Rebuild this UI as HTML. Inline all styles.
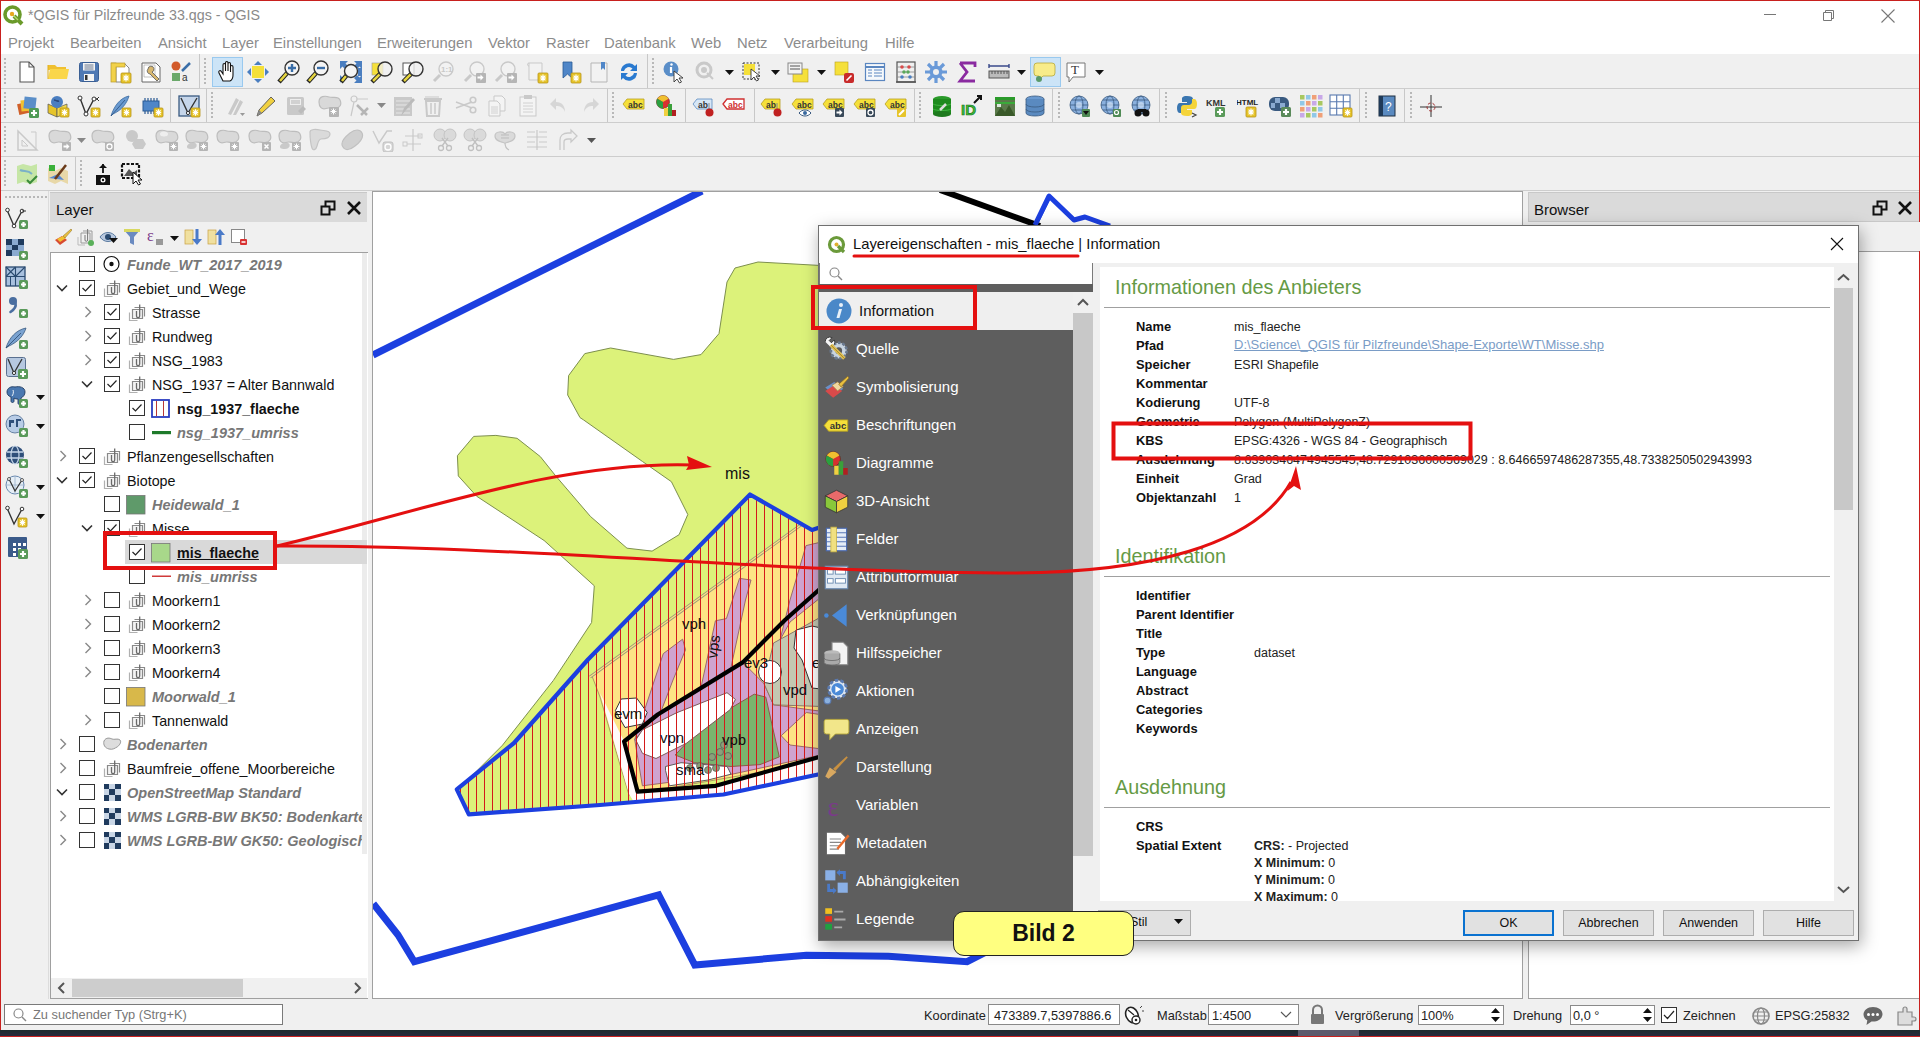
<!DOCTYPE html><html><head><meta charset="utf-8"><style>
*{margin:0;padding:0;box-sizing:border-box}
html,body{width:1920px;height:1037px;overflow:hidden;background:#f0f0f0;font-family:"Liberation Sans",sans-serif;color:#000}
div,svg{position:absolute}
.t{white-space:nowrap;line-height:1}
.tr{font-size:14.3px;color:#111}
.b{font-weight:bold}
.bi{font-weight:bold;font-style:italic;color:#777;font-size:14.5px}
.side{font-size:15px;color:#fff}
.lab{font-size:12.9px;font-weight:bold;color:#111}
.val{font-size:12.5px;color:#222}
.hd{font-size:19.8px;color:#659a45}
.st{font-size:12.8px;color:#222}
.btn{background:#e1e1e1;border:1px solid #adadad;font-size:12.5px;color:#111;text-align:center;line-height:25px}
</style></head><body><div style="left:0px;top:0px;width:1920px;height:30px;background:#fff"></div>
<div style="left:0px;top:30px;width:1920px;height:24px;background:#fff"></div>
<svg style="left:2px;top:4px;" width="22" height="22" viewBox="0 0 22 22"><circle cx="10.5" cy="10.5" r="7.5" fill="none" stroke="#6a9a2a" stroke-width="3.6"/><path d="M12 12L20 20" stroke="#6a9a2a" stroke-width="4"/><path d="M10 10L16 16" stroke="#b8d870" stroke-width="1.2"/><circle cx="10" cy="10" r="2.2" fill="#e8a820"/></svg>
<div class="t" style="left:28px;top:8px;font-size:14.25px;color:#8a8a8a">*QGIS für Pilzfreunde 33.qgs - QGIS</div>
<div class="t" style="left:8px;top:36px;font-size:14.8px;color:#8c8c8c">Projekt</div>
<div class="t" style="left:70px;top:36px;font-size:14.8px;color:#8c8c8c">Bearbeiten</div>
<div class="t" style="left:158px;top:36px;font-size:14.8px;color:#8c8c8c">Ansicht</div>
<div class="t" style="left:222px;top:36px;font-size:14.8px;color:#8c8c8c">Layer</div>
<div class="t" style="left:273px;top:36px;font-size:14.8px;color:#8c8c8c">Einstellungen</div>
<div class="t" style="left:377px;top:36px;font-size:14.8px;color:#8c8c8c">Erweiterungen</div>
<div class="t" style="left:488px;top:36px;font-size:14.8px;color:#8c8c8c">Vektor</div>
<div class="t" style="left:546px;top:36px;font-size:14.8px;color:#8c8c8c">Raster</div>
<div class="t" style="left:604px;top:36px;font-size:14.8px;color:#8c8c8c">Datenbank</div>
<div class="t" style="left:691px;top:36px;font-size:14.8px;color:#8c8c8c">Web</div>
<div class="t" style="left:737px;top:36px;font-size:14.8px;color:#8c8c8c">Netz</div>
<div class="t" style="left:784px;top:36px;font-size:14.8px;color:#8c8c8c">Verarbeitung</div>
<div class="t" style="left:885px;top:36px;font-size:14.8px;color:#8c8c8c">Hilfe</div>
<div style="left:1764px;top:14px;width:12px;height:1px;background:#777"></div>
<svg style="left:1820px;top:7px;" width="16" height="16" viewBox="0 0 16 16"><path d="M3.5 5.5h8v8h-8z M5.5 5.5v-2h8v8h-2" fill="none" stroke="#777" stroke-width="1"/></svg>
<svg style="left:1880px;top:8px;" width="16" height="16" viewBox="0 0 16 16"><path d="M1.5 1.5L14.5 14.5M14.5 1.5L1.5 14.5" stroke="#777" stroke-width="1.1"/></svg>
<div style="left:0px;top:54px;width:1920px;height:136px;background:#f0f0f0"></div>
<div style="left:0px;top:88px;width:1920px;height:1px;background:#cdcdcd"></div>
<div style="left:0px;top:122px;width:1920px;height:1px;background:#cdcdcd"></div>
<div style="left:0px;top:156px;width:1920px;height:1px;background:#cdcdcd"></div>
<div style="left:0px;top:190px;width:1920px;height:1px;background:#cdcdcd"></div>
<div style="left:0px;top:0px;width:1920px;height:1px;background:#c8201e"></div>
<div style="left:0px;top:0px;width:1px;height:1037px;background:#c8201e"></div>
<div style="left:1919px;top:0px;width:1px;height:1037px;background:#c8201e"></div>
<div style="left:1px;top:191px;width:49px;height:808px;background:#f0f0f0"></div>
<div style="left:48px;top:191px;width:1px;height:808px;background:#dcdcdc"></div>
<div style="left:50px;top:192px;width:317px;height:30px;background:#dadada;border-top:1px solid #c8c8c8"></div>
<div class="t" style="left:56px;top:202px;font-size:15px;color:#111">Layer</div>
<div style="left:50px;top:222px;width:323px;height:30px;background:#f0f0f0"></div>
<svg style="left:320px;top:200px;" width="16" height="16" viewBox="0 0 16 16"><path d="M5.5 1.5h9v8h-9z" fill="none" stroke="#111" stroke-width="2"/><path d="M1.5 6.5h8v8h-8z" fill="#dadada" stroke="#111" stroke-width="2"/></svg>
<svg style="left:346px;top:200px;" width="16" height="16" viewBox="0 0 16 16"><path d="M2 2L14 14M14 2L2 14" stroke="#111" stroke-width="2.6"/></svg>
<svg style="left:54px;top:228px;" width="18" height="18" viewBox="0 0 18 18"><path d="M1 12l7-4 5 4-7 5z" fill="#d84a30"/><path d="M3 11l6-3 3 2-6 4z" fill="#f0c030"/><path d="M9 8l8-7 1 1-7 8z" fill="#e8c040" stroke="#8a6a20" stroke-width="0.5"/></svg>
<svg style="left:77px;top:228px;" width="18" height="18" viewBox="0 0 18 18"><path d="M4 5h9v10H4z" fill="none" stroke="#999"/><path d="M6 3h9v10" fill="none" stroke="#999"/><path d="M1 9v8h7" fill="none" stroke="#bbb"/><path d="M8 7v5a1.3 1.3 0 002.6 0V1" fill="none" stroke="#777"/><circle cx="14" cy="15" r="3" fill="#5ab05a"/></svg>
<svg style="left:99px;top:228px;" width="18" height="18" viewBox="0 0 18 18"><path d="M1 9c4-6 12-6 16 0-4 6-12 6-16 0z" fill="#b8c8de" stroke="#5a7aa0"/><circle cx="9" cy="9" r="3" fill="#2a4a70"/></svg>
<svg style="left:123px;top:228px;" width="18" height="18" viewBox="0 0 18 18"><path d="M1 2h16l-6 7v8l-4-2V9z" fill="#6a8ac0"/><rect x="1" y="1" width="16" height="3" fill="#d8d860"/></svg>
<svg style="left:146px;top:228px;" width="18" height="18" viewBox="0 0 18 18"><text x="1" y="13" font-family="Liberation Serif" font-size="16" fill="#7a3a8a">ε</text><rect x="10" y="11" width="7" height="6" fill="#999"/></svg>
<svg style="left:184px;top:228px;" width="18" height="18" viewBox="0 0 18 18"><rect x="1" y="2" width="8" height="14" fill="#f0e0a0" stroke="#c8a040" stroke-width="0.7"/><path d="M13 1v12" stroke="#4a7ac8" stroke-width="3"/><path d="M8 11l5 6 5-6z" fill="#4a7ac8"/></svg>
<svg style="left:207px;top:228px;" width="18" height="18" viewBox="0 0 18 18"><rect x="1" y="2" width="8" height="14" fill="#f0e0a0" stroke="#c8a040" stroke-width="0.7"/><path d="M13 17V5" stroke="#4a7ac8" stroke-width="3"/><path d="M8 7l5-6 5 6z" fill="#4a7ac8"/></svg>
<svg style="left:230px;top:228px;" width="18" height="18" viewBox="0 0 18 18"><rect x="1.5" y="1.5" width="13" height="13" fill="#fff" stroke="#888"/><rect x="10" y="11" width="7" height="6" rx="1" fill="#d83030"/><path d="M11.5 14h4" stroke="#fff" stroke-width="1.5"/></svg>
<svg style="left:109px;top:238px;" width="9" height="5" viewBox="0 0 9 5"><path d="M0 0h9L4.5 5z" fill="#111"/></svg>
<svg style="left:170px;top:236px;" width="9" height="5" viewBox="0 0 9 5"><path d="M0 0h9L4.5 5z" fill="#111"/></svg>
<div style="left:50px;top:252px;width:318px;height:747px;background:#fff;border-left:1px solid #a0a0a0;border-bottom:1px solid #a0a0a0;border-top:1px solid #a0a0a0"></div>
<div style="left:51px;top:978px;width:316px;height:20px;background:#f0f0f0"></div>
<div style="left:72px;top:979px;width:171px;height:18px;background:#cdcdcd"></div>
<svg style="left:55px;top:980px;" width="14" height="16" viewBox="0 0 14 16"><path d="M9 3L4 8L9 13" fill="none" stroke="#555" stroke-width="2"/></svg>
<svg style="left:350px;top:980px;" width="14" height="16" viewBox="0 0 14 16"><path d="M5 3L10 8L5 13" fill="none" stroke="#555" stroke-width="2"/></svg>
<div style="left:372px;top:191px;width:1151px;height:808px;background:#fff;border:1px solid #a0a0a0"></div>
<svg style="left:373px;top:192px;" width="1149" height="806" viewBox="0 0 1149 806"><g transform="translate(-373 -192)"><polygon points="735,268 758,262 830,266 830,772 818,774.5 723.4,794.5 600,805 468.8,814.4 456.8,789.3 465.5,782.2 502.5,745.2 553.4,680.4 591.6,622.5 594.3,585.8 544.1,540.5 476.6,496.2 458.3,475.9 457.4,455.7 473.7,436.4 495.9,435.4 517.1,438.3 540.3,456.6 555.7,475.9 590.4,516.4 627,548.2 652.1,551.1 679.1,534.7 687.8,514.5 671.4,481.7 642.5,461.5 583.7,420 580,417.6 567.7,395 568.6,375.6 584.8,353.6 610.6,348 673.6,359.4 701,354.6 719,333.6 727,282" fill="#dcf27a" stroke="#7d8f4e" stroke-width="1"/><defs><clipPath id="bpc"><polygon points="750,494.5 812,530 830,524 830,775 818,774.5 723.4,794.5 600,805 468.8,814.4 456.8,789.3 514,743 588,659.5"/></clipPath></defs><g clip-path="url(#bpc)"><polygon points="592,676 830,504 830,760 629,795 600,697" fill="#fde485" stroke="#9a8a5a" stroke-width="0.8"/><polyline points="590,677 830,504" fill="none" stroke="#9a9a7a" stroke-width="3"/><polyline points="590,677 830,504" fill="none" stroke="#fde485" stroke-width="1.2"/><polygon points="600,693 624,741 637,792 716,786 830,755 830,800 640,812 629,794" fill="#fffafa"/><polygon points="739.5,578.4 751,580 745.5,600 730,672 700,692 715.4,620.8 726.4,618.6" fill="#cfa3cf" stroke="#9a6a6a" stroke-width="1"/><polygon points="806,545.6 830,540 830,590 790,622 780,640 790,600" fill="#cfa3cf" stroke="#9a6a6a" stroke-width="1"/><polygon points="663.3,653.6 682.6,639.2 685.5,649.8 673,680 660,714 634.7,739.5" fill="#cfa3cf" stroke="#9a6a6a" stroke-width="1"/><polygon points="634.7,739.5 657.8,714.5 742.7,662.4 764,683.6 773.5,704.8 816,710.6 830,712 830,753 733,774 642.4,785.8" fill="#cfa3cf" stroke="#9a6a6a" stroke-width="1"/><polygon points="773.5,643 830,612 830,706.8 773.5,704.8 764,683.6" fill="#c3c8b2" stroke="#8a7a6a" stroke-width="1"/><polygon points="781.2,735.7 806.3,712.5 830,716 830,750 790,745" fill="#fde485" stroke="#9a6a6a" stroke-width="1"/><polygon points="675.2,755 704,724 754.2,694.2 765.8,697.1 779.3,756.9 760,764.6 731,766.5 694.5,762.7" fill="#7ab46e" stroke="#8a5a4a" stroke-width="1"/><polygon points="635.8,740 642.5,729.8 676.3,712.9 727,692.7 735.4,699.4 730.3,709.5 686.4,743.3 656,758.5 642.5,753.4" fill="#fff" stroke="#7a5a5a" stroke-width="1"/><polygon points="665.5,766.5 681,762.7 727.2,766.5 731,774.2 708,780 669.4,785.8 665.5,770.4" fill="#fff" stroke="#5a5a5a" stroke-width="1"/><polygon points="615.4,710.6 621.2,699 636.6,698 647.2,712.5 642.4,724 625,727.5" fill="#fff" stroke="#333" stroke-width="1"/><circle cx="770" cy="672" r="11.5" fill="#fff" stroke="#333" stroke-width="1"/><polygon points="796,630 812,626 830,630 830,690 812,688 802,660 794,648" fill="#fff" stroke="#333" stroke-width="1"/><circle cx="720" cy="752" r="3.5" fill="#8aa07a" stroke="#555" stroke-width="0.7"/><circle cx="728" cy="756" r="3.5" fill="#8aa07a" stroke="#555" stroke-width="0.7"/><circle cx="724" cy="745" r="3.5" fill="#8aa07a" stroke="#555" stroke-width="0.7"/><circle cx="712" cy="757" r="3.5" fill="#8aa07a" stroke="#555" stroke-width="0.7"/><circle cx="700" cy="766" r="3.5" fill="#8aa07a" stroke="#555" stroke-width="0.7"/><circle cx="690" cy="768" r="3.5" fill="#8aa07a" stroke="#555" stroke-width="0.7"/><circle cx="708" cy="770" r="3.5" fill="#8aa07a" stroke="#555" stroke-width="0.7"/><circle cx="716" cy="768" r="3.5" fill="#8aa07a" stroke="#555" stroke-width="0.7"/><path d="M452.5 490V820M460.5 490V820M468.5 490V820M476.5 490V820M484.5 490V820M492.5 490V820M500.5 490V820M508.5 490V820M516.5 490V820M524.5 490V820M532.5 490V820M540.5 490V820M548.5 490V820M556.5 490V820M564.5 490V820M572.5 490V820M580.5 490V820M588.5 490V820M596.5 490V820M604.5 490V820M612.5 490V820M620.5 490V820M628.5 490V820M636.5 490V820M644.5 490V820M652.5 490V820M660.5 490V820M668.5 490V820M676.5 490V820M684.5 490V820M692.5 490V820M700.5 490V820M708.5 490V820M716.5 490V820M724.5 490V820M732.5 490V820M740.5 490V820M748.5 490V820M756.5 490V820M764.5 490V820M772.5 490V820M780.5 490V820M788.5 490V820M796.5 490V820M804.5 490V820M812.5 490V820M820.5 490V820M828.5 490V820" stroke="#d41a1a" stroke-width="1"/></g><polyline points="830,524 812,530 750,494.5 588,659.5 514,743 456.8,789.3 468.8,814.4 600,805 723.4,794.5 818,774.5 830,772" fill="none" stroke="#1c3fe0" stroke-width="4.2" stroke-linejoin="round"/><polyline points="830,580 785,620 742.7,662.4 657.8,714.5 624.1,741.5 637.6,791.6 715.7,785.8 830,754" fill="none" stroke="#000" stroke-width="4.2" stroke-linejoin="round"/><text x="725" y="479" font-family="Liberation Sans" font-size="16" fill="#111">mis</text><text x="682" y="629" font-family="Liberation Sans" font-size="15" fill="#111">vph</text><text x="717" y="659" font-family="Liberation Sans" font-size="15" fill="#111" transform="rotate(-82 717 659)">vps</text><text x="744" y="668" font-family="Liberation Sans" font-size="15" fill="#111">ev3</text><text x="783" y="695" font-family="Liberation Sans" font-size="15" fill="#111">vpd</text><text x="812" y="668" font-family="Liberation Sans" font-size="15" fill="#111">e</text><text x="614" y="719" font-family="Liberation Sans" font-size="15" fill="#111">evm</text><text x="660" y="743" font-family="Liberation Sans" font-size="15" fill="#111">vpn</text><text x="722" y="745" font-family="Liberation Sans" font-size="15" fill="#111">vpb</text><text x="676" y="775" font-family="Liberation Sans" font-size="15" fill="#111">sma</text><polyline points="373,355 702,191" fill="none" stroke="#1c3fe0" stroke-width="7"/><polyline points="940,190 1040,226" fill="none" stroke="#000" stroke-width="6"/><polyline points="1035,225 1049,196 1074,220 1085,217 1110,226" fill="none" stroke="#1c3fe0" stroke-width="5" stroke-linejoin="round"/><polyline points="1036,226 1050,198" fill="none" stroke="#1c3fe0" stroke-width="2"/><polyline points="373.3,903.7 397.9,934.8 414.3,961.7 658.7,894.8 694.8,965 806.4,955.2 888.4,956.2 967.1,961.7 1000,945" fill="none" stroke="#1c3fe0" stroke-width="7" stroke-linejoin="miter"/></g></svg>
<div style="left:1528px;top:192px;width:391px;height:30px;background:#dadada;border:1px solid #c8c8c8;border-right:none"></div>
<div class="t" style="left:1534px;top:201.5px;font-size:15px;color:#111">Browser</div>
<svg style="left:1872px;top:200px;" width="16" height="16" viewBox="0 0 16 16"><path d="M5.5 1.5h9v8h-9z" fill="none" stroke="#111" stroke-width="2"/><path d="M1.5 6.5h8v8h-8z" fill="#dadada" stroke="#111" stroke-width="2"/></svg>
<svg style="left:1897px;top:200px;" width="16" height="16" viewBox="0 0 16 16"><path d="M2 2L14 14M14 2L2 14" stroke="#111" stroke-width="2.6"/></svg>
<div style="left:1525px;top:222px;width:395px;height:29px;background:#f0f0f0"></div>
<div style="left:1528px;top:251px;width:391px;height:748px;background:#fff;border:1px solid #a0a0a0;border-right:none"></div>
<div style="left:1px;top:999px;width:1918px;height:31px;background:#f0f0f0"></div>
<div style="left:0px;top:1030px;width:1920px;height:6px;background:linear-gradient(#1c2a2c,#28283c)"></div>
<div style="left:1298px;top:1030px;width:61px;height:6px;background:#5c5a6c"></div>
<div style="left:0px;top:1036px;width:1920px;height:1px;background:#c8201e"></div>
<div style="left:212px;top:57px;width:31px;height:30px;background:#cce4f7;border:1px solid #99c9ef"></div><div style="left:1030px;top:57px;width:31px;height:30px;background:#cce4f7;border:1px solid #99c9ef"></div><svg style="left:15px;top:60px" width="24" height="24" viewBox="0 0 24 24"><path d="M5 2h9l5 5v15H5z" fill="#fff" stroke="#555" stroke-width="1.1"/><path d="M14 2v5h5" fill="none" stroke="#555" stroke-width="1.1"/></svg><svg style="left:46px;top:60px" width="24" height="24" viewBox="0 0 24 24"><path d="M2 5h7l2 2h9v3H2z" fill="#f0c030"/><path d="M2 19L4 9h19l-2 10z" fill="#fad64a"/><path d="M2 5v14" stroke="#e0b020"/></svg><svg style="left:77px;top:60px" width="24" height="24" viewBox="0 0 24 24"><rect x="2.5" y="2.5" width="19" height="19" rx="2" fill="#4f79b4" stroke="#3a5f94"/><rect x="6" y="3" width="12" height="7.5" fill="#f4f4f4"/><path d="M7.5 5h9M7.5 7h9M7.5 9h9" stroke="#4a5a7a" stroke-width="0.8"/><rect x="7" y="14" width="10" height="7" fill="#f4f4f4"/><rect x="8" y="15" width="2.5" height="5" fill="#333"/></svg><svg style="left:108px;top:60px" width="24" height="24" viewBox="0 0 24 24"><path d="M8 4h9l4 4v14H8z" fill="#fff" stroke="#888"/><rect x="3" y="3" width="5" height="19" fill="#f2d24a" stroke="#b89a2a" stroke-width="0.7"/><path d="M3 3h14v4H8" fill="#f2d24a" stroke="#b89a2a" stroke-width="0.7"/><rect x="13" y="13" width="10" height="10" rx="1" fill="#e6c42a" stroke="#b8961a" stroke-width="0.8"/><path d="M18.0 14.5v7.0M15.0 18.0h6.0M15.6 15.6l4.800000000000001 4.800000000000001M20.4 15.6l-4.800000000000001 4.800000000000001" stroke="#fff" stroke-width="1.2"/></svg><svg style="left:139px;top:60px" width="24" height="24" viewBox="0 0 24 24"><path d="M3 3h14l4 4v15H3z" fill="#fff" stroke="#666"/><path d="M5 5h11v12H5z" fill="none" stroke="#aaa" stroke-width="0.7"/><path d="M9 9a3 3 0 114 3l7 7-2 2-7-7a3 3 0 01-2-5" fill="#d8b870" stroke="#555" stroke-width="0.8"/></svg><svg style="left:169px;top:60px" width="24" height="24" viewBox="0 0 24 24"><circle cx="7" cy="6" r="4.5" fill="#d25a2a"/><path d="M13 11L21 3" stroke="#3a6ea8" stroke-width="2.5"/><rect x="3" y="13" width="8" height="8" fill="#6aa86a"/><text x="13" y="21" font-family="Liberation Sans" font-size="10" fill="#333">a</text></svg><svg style="left:216px;top:60px" width="24" height="24" viewBox="0 0 24 24"><path d="M7 21L3 13c-1-2 1-3 2-2l2 3V5c0-2 2.5-2 2.5 0v6V3c0-2 2.5-2 2.5 0v8V4c0-2 2.5-2 2.5 0v8V7c0-2 2.5-2 2.5 0v8c0 3-1 5-3 6z" fill="#fff" stroke="#111" stroke-width="1.1"/></svg><svg style="left:246px;top:60px" width="24" height="24" viewBox="0 0 24 24"><rect x="6" y="6" width="12" height="12" fill="#f5e03a"/><path d="M12 1l4 4h-8zM12 23l4-4h-8zM1 12l4-4v8zM23 12l-4-4v8z" fill="#4a7ec0"/></svg><svg style="left:277px;top:60px" width="24" height="24" viewBox="0 0 24 24"><path d="M10.100000000000001 12.899999999999999L2 22" stroke="#222" stroke-width="4.5"/><path d="M9.600000000000001 13.399999999999999L3 21" stroke="#e6d640" stroke-width="2.5"/><circle cx="15" cy="8" r="7" fill="#f4f4f4" stroke="#333" stroke-width="1.4"/><path d="M11 8h8M15 4v8" stroke="#3a6ea8" stroke-width="2.4"/></svg><svg style="left:306px;top:60px" width="24" height="24" viewBox="0 0 24 24"><path d="M10.100000000000001 12.899999999999999L2 22" stroke="#222" stroke-width="4.5"/><path d="M9.600000000000001 13.399999999999999L3 21" stroke="#e6d640" stroke-width="2.5"/><circle cx="15" cy="8" r="7" fill="#f4f4f4" stroke="#333" stroke-width="1.4"/><path d="M11 8h8" stroke="#3a6ea8" stroke-width="2.4"/></svg><svg style="left:339px;top:60px" width="24" height="24" viewBox="0 0 24 24"><path d="M1 1h8L6.5 3.5 9 6 6 9 3.5 6.5 1 9zM23 1h-8l2.5 2.5L15 6l3 3 2.5-2.5L23 9zM23 23h-8l2.5-2.5L15 18l3-3 2.5 2.5L23 15zM1 23V15l2.5 2.5" fill="#4a7ec0"/><rect x="19" y="8" width="4" height="8" fill="#4a7ec0"/><path d="M7.45 15.55L2 22" stroke="#222" stroke-width="4.5"/><path d="M6.95 16.05L3 21" stroke="#e6d640" stroke-width="2.5"/><circle cx="12" cy="11" r="6.5" fill="#f4f4f4" stroke="#333" stroke-width="1.4"/></svg><svg style="left:370px;top:60px" width="24" height="24" viewBox="0 0 24 24"><rect x="2" y="3" width="11" height="12" fill="#f5e03a" stroke="#999" stroke-width="0.6"/><path d="M10.100000000000001 13.899999999999999L2 22" stroke="#222" stroke-width="4.5"/><path d="M9.600000000000001 14.399999999999999L3 21" stroke="#e6d640" stroke-width="2.5"/><circle cx="15" cy="9" r="7" fill="rgba(240,240,240,.75)" stroke="#333" stroke-width="1.4"/></svg><svg style="left:401px;top:60px" width="24" height="24" viewBox="0 0 24 24"><rect x="2" y="3" width="11" height="12" fill="#fff" stroke="#555"/><path d="M10.100000000000001 13.899999999999999L2 22" stroke="#222" stroke-width="4.5"/><path d="M9.600000000000001 14.399999999999999L3 21" stroke="#e6d640" stroke-width="2.5"/><circle cx="15" cy="9" r="7" fill="rgba(240,240,240,.8)" stroke="#333" stroke-width="1.4"/></svg><svg style="left:432px;top:60px" width="24" height="24" viewBox="0 0 24 24"><path d="M8 15L2 21" stroke="#c9c9c9" stroke-width="3"/><circle cx="14" cy="9" r="7" fill="#f2f2f2" stroke="#c9c9c9" stroke-width="1.4"/><text x="9" y="12" font-family="Liberation Sans" font-size="8" font-weight="bold" fill="#c9c9c9">1:1</text></svg><svg style="left:463px;top:60px" width="24" height="24" viewBox="0 0 24 24"><path d="M8 15L2 21" stroke="#c9c9c9" stroke-width="3"/><circle cx="14" cy="9" r="7" fill="#f2f2f2" stroke="#c9c9c9" stroke-width="1.4"/><rect x="13" y="13" width="10" height="10" rx="1" fill="#b5b5b5"/><path d="M14.5 16.5h3v-2l3 3l-3 3v-2h-3z" fill="#fff"/></svg><svg style="left:494px;top:60px" width="24" height="24" viewBox="0 0 24 24"><path d="M8 15L2 21" stroke="#c9c9c9" stroke-width="3"/><circle cx="14" cy="9" r="7" fill="#f2f2f2" stroke="#c9c9c9" stroke-width="1.4"/><rect x="13" y="13" width="10" height="10" rx="1" fill="#b5b5b5"/><path d="M14.5 16.5h3v-2l3 3l-3 3v-2h-3z" fill="#fff"/></svg><svg style="left:525px;top:60px" width="24" height="24" viewBox="0 0 24 24"><path d="M4 3h13v17H4z" fill="#f2f2f2" stroke="#c9c9c9"/><path d="M4 3c-2 0-2 3 0 3" fill="none" stroke="#c9c9c9"/><rect x="13" y="13" width="10" height="10" rx="1" fill="#e6c42a" stroke="#b8961a" stroke-width="0.8"/><path d="M18.0 14.5v7.0M15.0 18.0h6.0M15.6 15.6l4.800000000000001 4.800000000000001M20.4 15.6l-4.800000000000001 4.800000000000001" stroke="#fff" stroke-width="1.2"/></svg><svg style="left:559px;top:60px" width="24" height="24" viewBox="0 0 24 24"><path d="M4 2h9v16l-4.5-4L4 18z" fill="#4f86c8" stroke="#2a5a94" stroke-width="0.8"/><rect x="12" y="13" width="10" height="10" rx="1" fill="#e6c42a" stroke="#b8961a" stroke-width="0.8"/><path d="M17.0 14.5v7.0M14.0 18.0h6.0M14.6 15.6l4.800000000000001 4.800000000000001M19.4 15.6l-4.800000000000001 4.800000000000001" stroke="#fff" stroke-width="1.2"/></svg><svg style="left:587px;top:60px" width="24" height="24" viewBox="0 0 24 24"><path d="M4 3h16v19H4z" fill="#f2f2f2" stroke="#b5b5b5"/><path d="M14 2h4v8l-2-2-2 2z" fill="#4f86c8"/></svg><svg style="left:617px;top:60px" width="24" height="24" viewBox="0 0 24 24"><path d="M4 11a8 8 0 0114-5l2-2v7h-7l2.5-2.5A5 5 0 007 11z" fill="#2a7ad0"/><path d="M20 13a8 8 0 01-14 5l-2 2v-7h7l-2.5 2.5A5 5 0 0017 13z" fill="#2a7ad0"/></svg><svg style="left:662px;top:60px" width="24" height="24" viewBox="0 0 24 24"><circle cx="9" cy="9" r="7.5" fill="#5a8ec8"/><path d="M9 7v6" stroke="#fff" stroke-width="2.2"/><circle cx="9.5" cy="4.5" r="1.2" fill="#fff"/><path d="M12 11v11l3-3 2.5 4 2-1-2.5-4h4z" fill="#fff" stroke="#333" stroke-width="0.9"/></svg><svg style="left:693px;top:60px" width="24" height="24" viewBox="0 0 24 24"><circle cx="11" cy="10" r="7" fill="none" stroke="#c9c9c9" stroke-width="3"/><circle cx="11" cy="10" r="3" fill="#c9c9c9"/><path d="M14 13l6 6" stroke="#c9c9c9" stroke-width="2"/></svg><svg style="left:740px;top:60px" width="24" height="24" viewBox="0 0 24 24"><rect x="3" y="3" width="16" height="16" fill="none" stroke="#333" stroke-dasharray="2 1.5"/><rect x="4" y="4" width="11" height="11" fill="#f5e03a"/><path d="M11 9v11l3-3 2.5 4 2-1-2.5-4h4z" fill="#fff" stroke="#333" stroke-width="0.9"/></svg><svg style="left:786px;top:60px" width="24" height="24" viewBox="0 0 24 24"><rect x="7" y="9" width="15" height="13" fill="#f5e03a" stroke="#bba020" stroke-width="0.6"/><rect x="2" y="3" width="14" height="11" fill="#f2f2f2" stroke="#888"/><path d="M4 6h10M4 9h10" stroke="#888" stroke-width="1.4"/></svg><svg style="left:832px;top:60px" width="24" height="24" viewBox="0 0 24 24"><rect x="3" y="2" width="13" height="13" fill="#f5e03a" stroke="#bba020" stroke-width="0.6"/><rect x="12" y="13" width="10" height="10" rx="2" fill="#c82a2a"/><path d="M14.5 20.5l5-5" stroke="#fff" stroke-width="1.6"/></svg><svg style="left:863px;top:60px" width="24" height="24" viewBox="0 0 24 24"><rect x="2.5" y="3.5" width="19" height="17" fill="#f6f9fc" stroke="#5a86c0" stroke-width="1.2"/><path d="M3 7h18" stroke="#5a86c0" stroke-width="2"/><path d="M5 10h4M11 10h8M5 13h4M11 13h8M5 16h4M11 16h8" stroke="#5a86c0"/></svg><svg style="left:894px;top:60px" width="24" height="24" viewBox="0 0 24 24"><rect x="3" y="2" width="18" height="20" fill="none" stroke="#555" stroke-width="1.2"/><path d="M3 7h18M3 12h18M3 17h18" stroke="#888" stroke-width="0.8"/><circle cx="8" cy="7" r="1.8" fill="#d84a4a"/><circle cx="15" cy="7" r="1.8" fill="#d84a4a"/><circle cx="10" cy="12" r="1.8" fill="#5aa85a"/><circle cx="14" cy="12" r="1.8" fill="#5aa85a"/><circle cx="8" cy="17" r="1.8" fill="#4a7ec0"/><circle cx="16" cy="17" r="1.8" fill="#4a7ec0"/><path d="M2 22h20" stroke="#555" stroke-width="1.5"/></svg><svg style="left:924px;top:60px" width="24" height="24" viewBox="0 0 24 24"><circle cx="12" cy="12" r="6.5" fill="#6a9ad8"/><path d="M12 1v22M1 12h22M4 4l16 16M20 4L4 20" stroke="#6a9ad8" stroke-width="3.2"/><circle cx="12" cy="12" r="3" fill="#f0f0f0"/></svg><svg style="left:956px;top:60px" width="24" height="24" viewBox="0 0 24 24"><path d="M4 3h15v4M19 21H4l7-9-7-9" fill="none" stroke="#8a2aa0" stroke-width="2.8"/></svg><svg style="left:987px;top:60px" width="24" height="24" viewBox="0 0 24 24"><rect x="2" y="11" width="20" height="7" fill="#bbb" stroke="#555"/><path d="M5 11v3M8 11v3M11 11v3M14 11v3M17 11v3M20 11v3" stroke="#555"/><path d="M2 6h20M2 4v4M22 4v4" stroke="#3a4a8a" stroke-width="1.4"/></svg><svg style="left:1033px;top:60px" width="24" height="24" viewBox="0 0 24 24"><path d="M4 3h15a3 3 0 013 3v7a3 3 0 01-3 3H10l-4 4v-4H4a3 3 0 01-3-3V6a3 3 0 013-3z" fill="#f8ec8a" stroke="#b8a83a" stroke-width="0.8"/><circle cx="6" cy="19" r="3" fill="#5a9a6a"/></svg><svg style="left:1064px;top:60px" width="24" height="24" viewBox="0 0 24 24"><path d="M3 3h18v14H9l-4 5v-5H3z" fill="#fff" stroke="#777"/><text x="7" y="14" font-family="Liberation Serif" font-size="13" fill="#333">T</text></svg><svg style="left:725px;top:70px" width="9" height="5"><path d="M0 0h9L4.5 5z" fill="#111"/></svg><svg style="left:771px;top:70px" width="9" height="5"><path d="M0 0h9L4.5 5z" fill="#111"/></svg><svg style="left:817px;top:70px" width="9" height="5"><path d="M0 0h9L4.5 5z" fill="#111"/></svg><svg style="left:1017px;top:70px" width="9" height="5"><path d="M0 0h9L4.5 5z" fill="#111"/></svg><svg style="left:1095px;top:70px" width="9" height="5"><path d="M0 0h9L4.5 5z" fill="#111"/></svg><svg style="left:4px;top:58px" width="2" height="28"><rect x="0" y="0" width="2" height="2" fill="#b8b8b8"/><rect x="0" y="4" width="2" height="2" fill="#b8b8b8"/><rect x="0" y="8" width="2" height="2" fill="#b8b8b8"/><rect x="0" y="12" width="2" height="2" fill="#b8b8b8"/><rect x="0" y="16" width="2" height="2" fill="#b8b8b8"/><rect x="0" y="20" width="2" height="2" fill="#b8b8b8"/><rect x="0" y="24" width="2" height="2" fill="#b8b8b8"/></svg><div style="left:199px;top:54px;width:1px;height:34px;background:#c8c8c8"></div><svg style="left:204px;top:58px" width="2" height="28"><rect x="0" y="0" width="2" height="2" fill="#b8b8b8"/><rect x="0" y="4" width="2" height="2" fill="#b8b8b8"/><rect x="0" y="8" width="2" height="2" fill="#b8b8b8"/><rect x="0" y="12" width="2" height="2" fill="#b8b8b8"/><rect x="0" y="16" width="2" height="2" fill="#b8b8b8"/><rect x="0" y="20" width="2" height="2" fill="#b8b8b8"/><rect x="0" y="24" width="2" height="2" fill="#b8b8b8"/></svg><div style="left:647px;top:54px;width:1px;height:34px;background:#c8c8c8"></div><svg style="left:652px;top:58px" width="2" height="28"><rect x="0" y="0" width="2" height="2" fill="#b8b8b8"/><rect x="0" y="4" width="2" height="2" fill="#b8b8b8"/><rect x="0" y="8" width="2" height="2" fill="#b8b8b8"/><rect x="0" y="12" width="2" height="2" fill="#b8b8b8"/><rect x="0" y="16" width="2" height="2" fill="#b8b8b8"/><rect x="0" y="20" width="2" height="2" fill="#b8b8b8"/><rect x="0" y="24" width="2" height="2" fill="#b8b8b8"/></svg><svg style="left:16px;top:94px" width="24" height="24" viewBox="0 0 24 24"><rect x="2" y="9" width="10" height="11" fill="#d0602a" transform="rotate(-12 7 14)"/><rect x="5" y="6" width="10" height="11" fill="#f0c030" transform="rotate(-6 10 12)"/><rect x="8" y="3" width="12" height="12" fill="#5a8ec8" transform="rotate(6 14 9)"/><rect x="13" y="14" width="10" height="10" rx="1.5" fill="#4f9a55"/><path d="M18.0 16v6M15 19.0h6" stroke="#fff" stroke-width="2.2"/></svg><svg style="left:46px;top:94px" width="24" height="24" viewBox="0 0 24 24"><path d="M2 10l9 4v9l-9-4z" fill="#e6c42a" stroke="#555" stroke-width="0.7"/><path d="M11 14l10-4v9l-10 4z" fill="#f2d84a" stroke="#555" stroke-width="0.7"/><circle cx="11" cy="8" r="6" fill="#4a7ec0"/><path d="M8 6c2 0 3 2 5 1" stroke="#2a4a80" stroke-width="1.5"/><rect x="14" y="14" width="9" height="9" rx="1" fill="#e6c42a" stroke="#b8961a" stroke-width="0.8"/><path d="M18.5 15.3v6.3999999999999995M15.8 18.5h5.3999999999999995M16.34 16.34l4.319999999999999 4.319999999999999M20.66 16.34l-4.319999999999999 4.319999999999999" stroke="#fff" stroke-width="1.2"/></svg><svg style="left:77px;top:94px" width="24" height="24" viewBox="0 0 24 24"><path d="M3 4l6 16 8-15h5" fill="none" stroke="#333" stroke-width="1.4"/><circle cx="3" cy="4" r="2" fill="#fff" stroke="#333"/><circle cx="9" cy="20" r="2" fill="#fff" stroke="#333"/><circle cx="17" cy="5" r="2" fill="#fff" stroke="#333"/><path d="M22 3l-2 2 2 2" fill="#fff" stroke="#333"/><rect x="14" y="14" width="9" height="9" rx="1" fill="#e6c42a" stroke="#b8961a" stroke-width="0.8"/><path d="M18.5 15.3v6.3999999999999995M15.8 18.5h5.3999999999999995M16.34 16.34l4.319999999999999 4.319999999999999M20.66 16.34l-4.319999999999999 4.319999999999999" stroke="#fff" stroke-width="1.2"/></svg><svg style="left:108px;top:94px" width="24" height="24" viewBox="0 0 24 24"><path d="M3 22C6 12 12 4 21 2C19 9 14 16 5 20z" fill="#6a9ad0" stroke="#3a6aa0" stroke-width="0.8"/><path d="M3 22L17 6" stroke="#2a5080" stroke-width="0.8"/><rect x="14" y="14" width="9" height="9" rx="1" fill="#e6c42a" stroke="#b8961a" stroke-width="0.8"/><path d="M18.5 15.3v6.3999999999999995M15.8 18.5h5.3999999999999995M16.34 16.34l4.319999999999999 4.319999999999999M20.66 16.34l-4.319999999999999 4.319999999999999" stroke="#fff" stroke-width="1.2"/></svg><svg style="left:140px;top:94px" width="24" height="24" viewBox="0 0 24 24"><rect x="3" y="7" width="16" height="10" fill="#4f86c8" stroke="#2a5a94"/><path d="M5 4v3M8 4v3M11 4v3M14 4v3M17 4v3M5 17v3M8 17v3M11 17v3M14 17v3" stroke="#2a5a94" stroke-width="1.2"/><rect x="14" y="14" width="9" height="9" rx="1" fill="#e6c42a" stroke="#b8961a" stroke-width="0.8"/><path d="M18.5 15.3v6.3999999999999995M15.8 18.5h5.3999999999999995M16.34 16.34l4.319999999999999 4.319999999999999M20.66 16.34l-4.319999999999999 4.319999999999999" stroke="#fff" stroke-width="1.2"/></svg><svg style="left:177px;top:94px" width="24" height="24" viewBox="0 0 24 24"><rect x="2" y="2" width="20" height="20" fill="#c6d6ea" stroke="#3a5a80" stroke-width="1.3"/><path d="M4 4l7 15 9-15" fill="none" stroke="#333" stroke-width="1.4"/><circle cx="11" cy="19" r="1.6" fill="#fff" stroke="#333"/><rect x="14" y="14" width="9" height="9" rx="1" fill="#e6c42a" stroke="#b8961a" stroke-width="0.8"/><path d="M18.5 15.3v6.3999999999999995M15.8 18.5h5.3999999999999995M16.34 16.34l4.319999999999999 4.319999999999999M20.66 16.34l-4.319999999999999 4.319999999999999" stroke="#fff" stroke-width="1.2"/></svg><svg style="left:224px;top:94px" width="24" height="24" viewBox="0 0 24 24"><path d="M4 20L12 4l3 2-8 15zM9 21l7-15 3 2-7 13z" fill="#c9c9c9"/><path d="M16 19h5l-2.5 3z" fill="#999"/></svg><svg style="left:254px;top:94px" width="24" height="24" viewBox="0 0 24 24"><path d="M3 22l2-6L17 3l4 4L8 19z" fill="#f0d040" stroke="#555" stroke-width="0.9"/><path d="M3 22l2-6 3 3z" fill="#888"/></svg><svg style="left:284px;top:94px" width="24" height="24" viewBox="0 0 24 24"><rect x="3" y="3" width="17" height="18" rx="1.5" fill="#c9c9c9"/><path d="M6 5h11v6H6z" fill="#eee"/><path d="M7 7h9M7 9h9" stroke="#b5b5b5"/><path d="M14 17l5-5 3 3-5 5z" fill="#bbb"/></svg><svg style="left:318px;top:94px" width="24" height="24" viewBox="0 0 24 24"><path d="M1 8C1 2 7 1.5 11 3S20 1.5 22 6S22 14 17 14.5S12 13 8 14.5S1 13 1 8z" fill="#d9d9d9" stroke="#bdbdbd" stroke-width="1.2"/><rect x="11" y="13" width="10" height="10" rx="1" fill="#b5b5b5"/><path d="M15.5 14.5v6M12.5 17.5h6M13.5 15.5l4 4M17.5 15.5l-4 4" stroke="#fff" stroke-width="1"/></svg><svg style="left:347px;top:94px" width="24" height="24" viewBox="0 0 24 24"><circle cx="7" cy="5" r="3" fill="none" stroke="#c9c9c9" stroke-width="1.2"/><path d="M7 8L4 22M10 5h11" stroke="#c9c9c9" stroke-width="1.2"/><path d="M10 11l10 10M14 21l7-7" stroke="#b5b5b5" stroke-width="2.5"/></svg><svg style="left:392px;top:94px" width="24" height="24" viewBox="0 0 24 24"><rect x="2" y="3" width="18" height="19" fill="#c9c9c9"/><path d="M4 7h14M4 11h14M4 15h14M4 19h14" stroke="#e6e6e6"/><path d="M9 22l3-8 9-10 2 2-9 10z" fill="#bbb"/></svg><svg style="left:421px;top:94px" width="24" height="24" viewBox="0 0 24 24"><path d="M3 4h18v2H3z" fill="#c9c9c9"/><path d="M5 7h14l-1 15H6z" fill="none" stroke="#c9c9c9" stroke-width="2"/><path d="M10 9v11M14 9v11" stroke="#c9c9c9" stroke-width="1.5"/><path d="M4 3h14" stroke="#c9c9c9"/></svg><svg style="left:454px;top:94px" width="24" height="24" viewBox="0 0 24 24"><path d="M2 8l16 6M2 14l16-6" stroke="#c9c9c9" stroke-width="1.4"/><circle cx="19" cy="6" r="2.8" fill="none" stroke="#c9c9c9" stroke-width="1.6"/><circle cx="19" cy="16" r="2.8" fill="none" stroke="#c9c9c9" stroke-width="1.6"/></svg><svg style="left:485px;top:94px" width="24" height="24" viewBox="0 0 24 24"><path d="M9 2h8l3 3v12H9z" fill="#f4f4f4" stroke="#c9c9c9"/><path d="M4 7h8l3 3v12H4z" fill="#f4f4f4" stroke="#c9c9c9"/><path d="M6 13h7M6 15h7M6 17h7M6 19h7" stroke="#c9c9c9" stroke-width="0.8"/></svg><svg style="left:516px;top:94px" width="24" height="24" viewBox="0 0 24 24"><rect x="4" y="3" width="16" height="19" fill="#f4f4f4" stroke="#c9c9c9"/><rect x="8" y="1" width="8" height="4" fill="#c9c9c9"/><path d="M7 9h10M7 12h10M7 15h10M7 18h10" stroke="#c9c9c9" stroke-width="0.8"/></svg><svg style="left:547px;top:94px" width="24" height="24" viewBox="0 0 24 24"><path d="M9 4L3 10l6 6v-4c4 0 7 1 9 6 0-6-3-10-9-10z" fill="#d6d6d6"/></svg><svg style="left:578px;top:94px" width="24" height="24" viewBox="0 0 24 24"><path d="M15 4l6 6-6 6v-4c-4 0-7 1-9 6 0-6 3-10 9-10z" fill="#d6d6d6"/></svg><svg style="left:622px;top:94px" width="24" height="24" viewBox="0 0 24 24"><path d="M1 10l4-5h17v10H5z" fill="#f5e03a" stroke="#b8a020" stroke-width="0.8"/><text x="6" y="13.5" font-family="Liberation Sans" font-size="8.5" font-weight="bold" fill="#333">abc</text></svg><svg style="left:654px;top:94px" width="24" height="24" viewBox="0 0 24 24"><circle cx="9" cy="8" r="6.5" fill="#d83030" stroke="#5a2a1a" stroke-width="0.6"/><path d="M9 8L3.4 4.8A6.5 6.5 0 0114.6 4.8z" fill="#f0c030"/><path d="M9 8L3.4 4.8A6.5 6.5 0 009 14.5z" fill="#2aa040"/><rect x="10" y="14" width="4" height="8" fill="#f0d040"/><rect x="14" y="10" width="4" height="12" fill="#3aa03a"/><rect x="18" y="16" width="4" height="6" fill="#b02020"/></svg><svg style="left:692px;top:94px" width="24" height="24" viewBox="0 0 24 24"><path d="M1 10l4-5h15v10H5z" fill="#d6e6f6" stroke="#5a8ac0" stroke-width="0.8"/><text x="6" y="13.5" font-family="Liberation Sans" font-size="8.5" font-weight="bold" fill="#333">ab</text><path d="M17 9v8" stroke="#888"/><circle cx="17.5" cy="18.5" r="4" fill="#c02020"/></svg><svg style="left:722px;top:94px" width="24" height="24" viewBox="0 0 24 24"><path d="M1 10l4-5h17v10H5z" fill="#fff" stroke="#d03030" stroke-width="1.3"/><text x="6" y="13.5" font-family="Liberation Sans" font-size="8.5" font-weight="bold" fill="#d03030">abc</text></svg><svg style="left:760px;top:94px" width="24" height="24" viewBox="0 0 24 24"><path d="M1 10l4-5h15v10H5z" fill="#f5e03a" stroke="#b8a020" stroke-width="0.8"/><text x="6" y="13.5" font-family="Liberation Sans" font-size="8.5" font-weight="bold" fill="#333">ab</text><path d="M17 9v8" stroke="#888"/><circle cx="17.5" cy="18.5" r="4" fill="#c02020"/></svg><svg style="left:791px;top:94px" width="24" height="24" viewBox="0 0 24 24"><path d="M1 10l4-5h17v10H5z" fill="#f5e03a" stroke="#b8a020" stroke-width="0.8"/><text x="6" y="13.5" font-family="Liberation Sans" font-size="8.5" font-weight="bold" fill="#333">abc</text><path d="M8 19c3-4 9-4 12 0-3 4-9 4-12 0z" fill="#fff" stroke="#3a5a80"/><circle cx="14" cy="19" r="2" fill="#3a6aa0"/></svg><svg style="left:822px;top:94px" width="24" height="24" viewBox="0 0 24 24"><path d="M1 10l4-5h17v10H5z" fill="#f5e03a" stroke="#b8a020" stroke-width="0.8"/><text x="6" y="13.5" font-family="Liberation Sans" font-size="8.5" font-weight="bold" fill="#333">abc</text><rect x="13" y="14" width="9" height="9" rx="1" fill="#3a4a5a"/><path d="M14.5 17.5h3v-2l3 3-3 3v-2h-3z" fill="#fff"/></svg><svg style="left:853px;top:94px" width="24" height="24" viewBox="0 0 24 24"><path d="M1 10l4-5h17v10H5z" fill="#f5e03a" stroke="#b8a020" stroke-width="0.8"/><text x="6" y="13.5" font-family="Liberation Sans" font-size="8.5" font-weight="bold" fill="#333">abc</text><rect x="13" y="14" width="9" height="9" rx="1" fill="#3a4a5a"/><circle cx="17.5" cy="18.5" r="2.5" fill="none" stroke="#fff" stroke-width="1.3"/></svg><svg style="left:884px;top:94px" width="24" height="24" viewBox="0 0 24 24"><path d="M1 10l4-5h17v10H5z" fill="#f5e03a" stroke="#b8a020" stroke-width="0.8"/><text x="6" y="13.5" font-family="Liberation Sans" font-size="8.5" font-weight="bold" fill="#333">abc</text><rect x="13" y="14" width="9" height="9" rx="1" fill="#e6c42a"/><path d="M15 21l5-5" stroke="#fff" stroke-width="2"/></svg><svg style="left:930px;top:94px" width="24" height="24" viewBox="0 0 24 24"><ellipse cx="12" cy="5" rx="9" ry="3" fill="#2a9a2a"/><rect x="3" y="5" width="18" height="15" fill="#1e8a1e"/><ellipse cx="12" cy="20" rx="9" ry="3" fill="#1e7a1e"/><path d="M3 10c3 2 15 2 18 0M3 15c3 2 15 2 18 0" stroke="#4ac04a" stroke-width="0.8" fill="none"/><path d="M10 16l6-6" stroke="#ddd" stroke-width="2.5"/></svg><svg style="left:960px;top:94px" width="24" height="24" viewBox="0 0 24 24"><text x="1" y="21" font-family="Liberation Sans" font-size="15" font-weight="bold" fill="#3ac03a" stroke="#1a6a1a" stroke-width="0.6">ID</text><path d="M14 9L21 2M17 2h4v4" stroke="#111" stroke-width="2" fill="none"/></svg><svg style="left:993px;top:94px" width="24" height="24" viewBox="0 0 24 24"><rect x="2" y="3" width="20" height="19" fill="#5a7a4a"/><rect x="2" y="3" width="20" height="3" fill="#2a9a2a"/><rect x="2" y="8" width="20" height="2" fill="#3aaa3a"/><path d="M2 22l6-9 4 5 4-7 6 11z" fill="#3a5a2a"/><rect x="4" y="10" width="4" height="3" fill="#dde8dd"/></svg><svg style="left:1023px;top:94px" width="24" height="24" viewBox="0 0 24 24"><ellipse cx="12" cy="5" rx="9" ry="3" fill="#6a9ad0" stroke="#3a5a80" stroke-width="0.8"/><path d="M3 5v14c0 4 18 4 18 0V5" fill="#5a8ac0" stroke="#3a5a80" stroke-width="0.8"/><path d="M3 10c0 4 18 4 18 0M3 15c0 4 18 4 18 0" stroke="#3a5a80" fill="none" stroke-width="0.8"/></svg><svg style="left:1068px;top:94px" width="24" height="24" viewBox="0 0 24 24"><circle cx="11" cy="11" r="9" fill="#8ab0de" stroke="#3a5a80" stroke-width="0.8"/><ellipse cx="11" cy="11" rx="4" ry="9" fill="none" stroke="#3a5a80" stroke-width="0.8"/><path d="M2 11h18M4 6h14M4 16h14" stroke="#3a5a80" stroke-width="0.8"/><circle cx="11" cy="11" r="3" fill="#cfe0f4" opacity=".7"/><rect x="14" y="15" width="8" height="8" rx="1" fill="#4f8a55"/><path d="M15 17h6L18 21z" fill="#111"/></svg><svg style="left:1099px;top:94px" width="24" height="24" viewBox="0 0 24 24"><circle cx="11" cy="11" r="9" fill="#8ab0de" stroke="#3a5a80" stroke-width="0.8"/><ellipse cx="11" cy="11" rx="4" ry="9" fill="none" stroke="#3a5a80" stroke-width="0.8"/><path d="M2 11h18M4 6h14M4 16h14" stroke="#3a5a80" stroke-width="0.8"/><circle cx="11" cy="11" r="3" fill="#cfe0f4" opacity=".7"/><rect x="14" y="15" width="8" height="8" rx="1" fill="#4f8a55"/><circle cx="17.5" cy="18.5" r="2" fill="none" stroke="#fff" stroke-width="1.2"/></svg><svg style="left:1130px;top:94px" width="24" height="24" viewBox="0 0 24 24"><circle cx="11" cy="11" r="9" fill="#8ab0de" stroke="#3a5a80" stroke-width="0.8"/><ellipse cx="11" cy="11" rx="4" ry="9" fill="none" stroke="#3a5a80" stroke-width="0.8"/><path d="M2 11h18M4 6h14M4 16h14" stroke="#3a5a80" stroke-width="0.8"/><circle cx="11" cy="11" r="3" fill="#cfe0f4" opacity=".7"/><circle cx="8" cy="19" r="3.5" fill="#111"/><circle cx="16" cy="19" r="3.5" fill="#111"/><rect x="8" y="15" width="8" height="3" fill="#111"/></svg><svg style="left:1175px;top:94px" width="24" height="24" viewBox="0 0 24 24"><path d="M12 2c-5 0-5 2-5 3v3h5v1H5c-2 0-3 2-3 5s1 5 3 5h2v-3c0-2 2-3 3-3h5c2 0 3-1 3-3V5c0-2-2-3-6-3z" fill="#3a76b0"/><path d="M12 22c5 0 5-2 5-3v-3h-5v-1h7c2 0 3-2 3-5s-1-5-3-5h-2v3c0 2-2 3-3 3H9c-2 0-3 1-3 3v5c0 2 2 3 6 3z" fill="#f5d43a"/><path d="M17 19l4 2-4 2" fill="none" stroke="#444" stroke-width="1.2"/></svg><svg style="left:1206px;top:94px" width="24" height="24" viewBox="0 0 24 24"><text x="0" y="12" font-family="Liberation Sans" font-size="9" font-weight="bold" fill="#333">KML</text><rect x="9" y="13" width="10" height="10" rx="1.5" fill="#5a9a5a"/><path d="M14.0 15v6M11 18.0h6" stroke="#fff" stroke-width="2.2"/></svg><svg style="left:1237px;top:94px" width="24" height="24" viewBox="0 0 24 24"><text x="-1" y="11" font-family="Liberation Sans" font-size="8" font-weight="bold" fill="#222">HTML</text><rect x="9" y="13" width="10" height="10" rx="1" fill="#e6c42a" stroke="#b8961a" stroke-width="0.8"/><path d="M14.0 14.5v7.0M11.0 18.0h6.0M11.6 15.6l4.800000000000001 4.800000000000001M16.4 15.6l-4.800000000000001 4.800000000000001" stroke="#fff" stroke-width="1.2"/></svg><svg style="left:1268px;top:94px" width="24" height="24" viewBox="0 0 24 24"><rect x="1" y="3" width="20" height="14" rx="6" fill="#3a5a80"/><path d="M7 4h5v5H7zM12 9h5v5h-5zM3 9h4v5H3z" fill="#8aaad0"/><rect x="13" y="13" width="10" height="10" rx="1.5" fill="#5a8a5a"/><path d="M18.0 15v6M15 18.0h6" stroke="#fff" stroke-width="2.2"/></svg><svg style="left:1299px;top:94px" width="24" height="24" viewBox="0 0 24 24"><rect x="1" y="1" width="4.5" height="4.5" fill="#a8c860"/><rect x="7" y="1" width="4.5" height="4.5" fill="#90c8e8"/><rect x="13" y="1" width="4.5" height="4.5" fill="#f0a078"/><rect x="19" y="1" width="4.5" height="4.5" fill="#c8a8e8"/><rect x="1" y="7" width="4.5" height="4.5" fill="#90c8e8"/><rect x="7" y="7" width="4.5" height="4.5" fill="#f0a078"/><rect x="13" y="7" width="4.5" height="4.5" fill="#c8a8e8"/><rect x="19" y="7" width="4.5" height="4.5" fill="#a8c860"/><rect x="1" y="13" width="4.5" height="4.5" fill="#f0a078"/><rect x="7" y="13" width="4.5" height="4.5" fill="#c8a8e8"/><rect x="13" y="13" width="4.5" height="4.5" fill="#a8c860"/><rect x="19" y="13" width="4.5" height="4.5" fill="#90c8e8"/><rect x="1" y="19" width="4.5" height="4.5" fill="#c8a8e8"/><rect x="7" y="19" width="4.5" height="4.5" fill="#a8c860"/><rect x="13" y="19" width="4.5" height="4.5" fill="#90c8e8"/><rect x="19" y="19" width="4.5" height="4.5" fill="#f0a078"/></svg><svg style="left:1329px;top:94px" width="24" height="24" viewBox="0 0 24 24"><rect x="1" y="1" width="20" height="20" fill="#fff" stroke="#5a7ab0" stroke-width="1.1"/><path d="M7.7 1v20M14.3 1v20M1 7.7h20M1 14.3h20" stroke="#5a7ab0" stroke-width="1.1"/><rect x="14" y="14" width="9" height="9" rx="1" fill="#e6c42a" stroke="#b8961a" stroke-width="0.8"/><path d="M18.5 15.3v6.3999999999999995M15.8 18.5h5.3999999999999995M16.34 16.34l4.319999999999999 4.319999999999999M20.66 16.34l-4.319999999999999 4.319999999999999" stroke="#fff" stroke-width="1.2"/></svg><svg style="left:1375px;top:94px" width="24" height="24" viewBox="0 0 24 24"><rect x="4" y="2" width="16" height="20" fill="#5a8ac0" stroke="#1f2f40" stroke-width="1"/><rect x="4" y="2" width="4" height="20" fill="#1f3a58"/><text x="10" y="17" font-family="Liberation Sans" font-size="12" fill="#fff">?</text></svg><svg style="left:1419px;top:94px" width="24" height="24" viewBox="0 0 24 24"><path d="M1 13h22M12 1v22" stroke="#333" stroke-width="1"/><circle cx="12" cy="13" r="4" fill="none" stroke="#a03030" stroke-width="1" stroke-dasharray="3 2"/></svg><svg style="left:377px;top:103px" width="9" height="5"><path d="M0 0h9L4.5 5z" fill="#888"/></svg><svg style="left:4px;top:92px" width="2" height="28"><rect x="0" y="0" width="2" height="2" fill="#b8b8b8"/><rect x="0" y="4" width="2" height="2" fill="#b8b8b8"/><rect x="0" y="8" width="2" height="2" fill="#b8b8b8"/><rect x="0" y="12" width="2" height="2" fill="#b8b8b8"/><rect x="0" y="16" width="2" height="2" fill="#b8b8b8"/><rect x="0" y="20" width="2" height="2" fill="#b8b8b8"/><rect x="0" y="24" width="2" height="2" fill="#b8b8b8"/></svg><div style="left:170px;top:89px;width:1px;height:33px;background:#c8c8c8"></div><div style="left:206px;top:89px;width:1px;height:33px;background:#c8c8c8"></div><div style="left:607px;top:89px;width:1px;height:33px;background:#c8c8c8"></div><div style="left:685px;top:89px;width:1px;height:33px;background:#c8c8c8"></div><div style="left:754px;top:89px;width:1px;height:33px;background:#c8c8c8"></div><div style="left:914px;top:89px;width:1px;height:33px;background:#c8c8c8"></div><div style="left:1052px;top:89px;width:1px;height:33px;background:#c8c8c8"></div><div style="left:1159px;top:89px;width:1px;height:33px;background:#c8c8c8"></div><div style="left:1359px;top:89px;width:1px;height:33px;background:#c8c8c8"></div><div style="left:1404px;top:89px;width:1px;height:33px;background:#c8c8c8"></div><svg style="left:211px;top:92px" width="2" height="28"><rect x="0" y="0" width="2" height="2" fill="#b8b8b8"/><rect x="0" y="4" width="2" height="2" fill="#b8b8b8"/><rect x="0" y="8" width="2" height="2" fill="#b8b8b8"/><rect x="0" y="12" width="2" height="2" fill="#b8b8b8"/><rect x="0" y="16" width="2" height="2" fill="#b8b8b8"/><rect x="0" y="20" width="2" height="2" fill="#b8b8b8"/><rect x="0" y="24" width="2" height="2" fill="#b8b8b8"/></svg><svg style="left:612px;top:92px" width="2" height="28"><rect x="0" y="0" width="2" height="2" fill="#b8b8b8"/><rect x="0" y="4" width="2" height="2" fill="#b8b8b8"/><rect x="0" y="8" width="2" height="2" fill="#b8b8b8"/><rect x="0" y="12" width="2" height="2" fill="#b8b8b8"/><rect x="0" y="16" width="2" height="2" fill="#b8b8b8"/><rect x="0" y="20" width="2" height="2" fill="#b8b8b8"/><rect x="0" y="24" width="2" height="2" fill="#b8b8b8"/></svg><svg style="left:919px;top:92px" width="2" height="28"><rect x="0" y="0" width="2" height="2" fill="#b8b8b8"/><rect x="0" y="4" width="2" height="2" fill="#b8b8b8"/><rect x="0" y="8" width="2" height="2" fill="#b8b8b8"/><rect x="0" y="12" width="2" height="2" fill="#b8b8b8"/><rect x="0" y="16" width="2" height="2" fill="#b8b8b8"/><rect x="0" y="20" width="2" height="2" fill="#b8b8b8"/><rect x="0" y="24" width="2" height="2" fill="#b8b8b8"/></svg><svg style="left:1058px;top:92px" width="2" height="28"><rect x="0" y="0" width="2" height="2" fill="#b8b8b8"/><rect x="0" y="4" width="2" height="2" fill="#b8b8b8"/><rect x="0" y="8" width="2" height="2" fill="#b8b8b8"/><rect x="0" y="12" width="2" height="2" fill="#b8b8b8"/><rect x="0" y="16" width="2" height="2" fill="#b8b8b8"/><rect x="0" y="20" width="2" height="2" fill="#b8b8b8"/><rect x="0" y="24" width="2" height="2" fill="#b8b8b8"/></svg><svg style="left:1165px;top:92px" width="2" height="28"><rect x="0" y="0" width="2" height="2" fill="#b8b8b8"/><rect x="0" y="4" width="2" height="2" fill="#b8b8b8"/><rect x="0" y="8" width="2" height="2" fill="#b8b8b8"/><rect x="0" y="12" width="2" height="2" fill="#b8b8b8"/><rect x="0" y="16" width="2" height="2" fill="#b8b8b8"/><rect x="0" y="20" width="2" height="2" fill="#b8b8b8"/><rect x="0" y="24" width="2" height="2" fill="#b8b8b8"/></svg><svg style="left:1365px;top:92px" width="2" height="28"><rect x="0" y="0" width="2" height="2" fill="#b8b8b8"/><rect x="0" y="4" width="2" height="2" fill="#b8b8b8"/><rect x="0" y="8" width="2" height="2" fill="#b8b8b8"/><rect x="0" y="12" width="2" height="2" fill="#b8b8b8"/><rect x="0" y="16" width="2" height="2" fill="#b8b8b8"/><rect x="0" y="20" width="2" height="2" fill="#b8b8b8"/><rect x="0" y="24" width="2" height="2" fill="#b8b8b8"/></svg><svg style="left:1410px;top:92px" width="2" height="28"><rect x="0" y="0" width="2" height="2" fill="#b8b8b8"/><rect x="0" y="4" width="2" height="2" fill="#b8b8b8"/><rect x="0" y="8" width="2" height="2" fill="#b8b8b8"/><rect x="0" y="12" width="2" height="2" fill="#b8b8b8"/><rect x="0" y="16" width="2" height="2" fill="#b8b8b8"/><rect x="0" y="20" width="2" height="2" fill="#b8b8b8"/><rect x="0" y="24" width="2" height="2" fill="#b8b8b8"/></svg><svg style="left:15px;top:128px" width="24" height="24" viewBox="0 0 24 24"><path d="M3 3v19h19z" fill="none" stroke="#c9c9c9" stroke-width="1.5"/><path d="M7 12v6h6z" fill="none" stroke="#c9c9c9"/><path d="M16 4h5v18" fill="none" stroke="#c9c9c9"/></svg><svg style="left:48px;top:128px" width="24" height="24" viewBox="0 0 24 24"><path d="M1 8C1 2 7 1.5 11 3S20 1.5 22 6S22 14 17 14.5S12 13 8 14.5S1 13 1 8z" fill="#d9d9d9" stroke="#bdbdbd" stroke-width="1.2"/><rect x="14" y="14" width="9" height="9" rx="1" fill="#b5b5b5"/><path d="M15.5 17.5h3v-2l3 3l-3 3v-2h-3z" fill="#fff"/></svg><svg style="left:91px;top:128px" width="24" height="24" viewBox="0 0 24 24"><path d="M1 8C1 2 7 1.5 11 3S20 1.5 22 6S22 14 17 14.5S12 13 8 14.5S1 13 1 8z" fill="#d9d9d9" stroke="#bdbdbd" stroke-width="1.2"/><rect x="14" y="14" width="9" height="9" rx="1" fill="#b5b5b5"/><circle cx="18.5" cy="18.5" r="2.5" fill="none" stroke="#fff" stroke-width="1.3"/></svg><svg style="left:123px;top:128px" width="24" height="24" viewBox="0 0 24 24"><circle cx="9" cy="8" r="6" fill="#c9c9c9"/><path d="M12 11h8l3 5-3 5h-8l-3-5z" fill="#c9c9c9"/></svg><svg style="left:155px;top:128px" width="24" height="24" viewBox="0 0 24 24"><path d="M1 8C1 2 7 1.5 11 3S20 1.5 22 6S22 14 17 14.5S12 13 8 14.5S1 13 1 8z" fill="#d9d9d9" stroke="#bdbdbd" stroke-width="1.2"/><ellipse cx="9" cy="6" rx="4" ry="2.5" fill="#eee"/><rect x="14" y="14" width="9" height="9" rx="1" fill="#b5b5b5"/><path d="M18.5 15.5v6M15.5 18.5h6M16.5 16.5l4 4M20.5 16.5l-4 4" stroke="#fff" stroke-width="1"/></svg><svg style="left:185px;top:128px" width="24" height="24" viewBox="0 0 24 24"><path d="M1 8C1 2 7 1.5 11 3S20 1.5 22 6S22 14 17 14.5S12 13 8 14.5S1 13 1 8z" fill="#d9d9d9" stroke="#bdbdbd" stroke-width="1.2"/><path d="M2 18c1-3 5-4 8-3s2 6-3 6-5-1-5-3z" fill="#c9c9c9"/><rect x="14" y="14" width="9" height="9" rx="1" fill="#b5b5b5"/><path d="M18.5 15.5v6M15.5 18.5h6M16.5 16.5l4 4M20.5 16.5l-4 4" stroke="#fff" stroke-width="1"/></svg><svg style="left:216px;top:128px" width="24" height="24" viewBox="0 0 24 24"><path d="M1 8C1 2 7 1.5 11 3S20 1.5 22 6S22 14 17 14.5S12 13 8 14.5S1 13 1 8z" fill="#d9d9d9" stroke="#bdbdbd" stroke-width="1.2"/><rect x="14" y="14" width="9" height="9" rx="1" fill="#b5b5b5"/><path d="M18.5 15.5v6M15.5 18.5h6M16.5 16.5l4 4M20.5 16.5l-4 4" stroke="#fff" stroke-width="1"/></svg><svg style="left:248px;top:128px" width="24" height="24" viewBox="0 0 24 24"><path d="M1 8C1 2 7 1.5 11 3S20 1.5 22 6S22 14 17 14.5S12 13 8 14.5S1 13 1 8z" fill="#d9d9d9" stroke="#bdbdbd" stroke-width="1.2"/><rect x="14" y="14" width="9" height="9" rx="1" fill="#b5b5b5"/><path d="M16.5 16.5l4 4M20.5 16.5l-4 4" stroke="#fff" stroke-width="1.5"/></svg><svg style="left:278px;top:128px" width="24" height="24" viewBox="0 0 24 24"><path d="M1 8C1 2 7 1.5 11 3S20 1.5 22 6S22 14 17 14.5S12 13 8 14.5S1 13 1 8z" fill="#d9d9d9" stroke="#bdbdbd" stroke-width="1.2"/><path d="M2 18c1-3 5-4 8-3s2 6-3 6-5-1-5-3z" fill="#c9c9c9"/><rect x="14" y="14" width="9" height="9" rx="1" fill="#b5b5b5"/><path d="M18.5 15.5v6M15.5 18.5h6M16.5 16.5l4 4M20.5 16.5l-4 4" stroke="#fff" stroke-width="1"/></svg><svg style="left:308px;top:128px" width="24" height="24" viewBox="0 0 24 24"><path d="M2 4c0-3 6-3 10-2s10 0 10 4-5 5-9 5c-2 0-3 3-4 7s-4 5-5 2S2 9 2 4z" fill="#dadada" stroke="#c4c4c4" stroke-width="1.2"/></svg><svg style="left:340px;top:128px" width="24" height="24" viewBox="0 0 24 24"><path d="M3 19c-3-4 2-10 7-14s10-4 12 0-2 9-7 13-10 5-12 1z" fill="#d0d0d0" stroke="#c0c0c0" stroke-width="1.2"/></svg><svg style="left:371px;top:128px" width="24" height="24" viewBox="0 0 24 24"><path d="M2 3l6 12 8-12h5" fill="none" stroke="#c9c9c9" stroke-width="1.4"/><rect x="12" y="14" width="10" height="10" rx="2" fill="#d6d6d6" stroke="#c0c0c0"/><circle cx="17" cy="19" r="3" fill="none" stroke="#fff" stroke-width="1.3"/></svg><svg style="left:401px;top:128px" width="24" height="24" viewBox="0 0 24 24"><path d="M12 1v22M4 8h16M6 16h14" stroke="#c9c9c9" stroke-width="1.2"/><rect x="2" y="14" width="4" height="4" fill="none" stroke="#c9c9c9"/><rect x="17" y="6" width="4" height="4" fill="none" stroke="#c9c9c9"/></svg><svg style="left:433px;top:128px" width="24" height="24" viewBox="0 0 24 24"><circle cx="7" cy="7" r="6" fill="#dadada" stroke="#c4c4c4"/><circle cx="17" cy="7" r="6" fill="#dadada" stroke="#c4c4c4"/><path d="M9 10l6 8M15 10l-6 8" stroke="#c0c0c0" stroke-width="1.4"/><circle cx="8" cy="20" r="2.5" fill="none" stroke="#c0c0c0" stroke-width="1.3"/><circle cx="16" cy="20" r="2.5" fill="none" stroke="#c0c0c0" stroke-width="1.3"/></svg><svg style="left:463px;top:128px" width="24" height="24" viewBox="0 0 24 24"><circle cx="7" cy="7" r="6" fill="#dadada" stroke="#c4c4c4"/><circle cx="17" cy="7" r="6" fill="#dadada" stroke="#c4c4c4"/><path d="M9 10l6 8M15 10l-6 8" stroke="#c0c0c0" stroke-width="1.4"/><circle cx="8" cy="20" r="2.5" fill="none" stroke="#c0c0c0" stroke-width="1.3"/><circle cx="16" cy="20" r="2.5" fill="none" stroke="#c0c0c0" stroke-width="1.3"/></svg><svg style="left:493px;top:128px" width="24" height="24" viewBox="0 0 24 24"><path d="M2 8c0-5 8-5 10-2 2-3 10-3 10 2s-6 6-10 7c-4-1-10-2-10-7z" fill="#dadada" stroke="#c4c4c4" stroke-width="1.2"/><path d="M8 7h8M8 10h8" stroke="#bbb"/><path d="M12 15c0 3 2 6 4 7" stroke="#c0c0c0" stroke-width="1.2" fill="none"/></svg><svg style="left:525px;top:128px" width="24" height="24" viewBox="0 0 24 24"><path d="M2 4h8M14 4h8M2 9h20M2 14h8M14 14h8M2 19h20M12 2v20" stroke="#c9c9c9" stroke-width="1.2"/></svg><svg style="left:555px;top:128px" width="24" height="24" viewBox="0 0 24 24"><path d="M5 22V12c0-4 3-7 8-7h3V2l6 6-6 6v-3h-3c-2 0-4 1-4 3v8" fill="none" stroke="#c9c9c9" stroke-width="1.3"/></svg><svg style="left:77px;top:138px" width="9" height="5"><path d="M0 0h9L4.5 5z" fill="#888"/></svg><svg style="left:587px;top:138px" width="9" height="5"><path d="M0 0h9L4.5 5z" fill="#555"/></svg><svg style="left:4px;top:126px" width="2" height="28"><rect x="0" y="0" width="2" height="2" fill="#b8b8b8"/><rect x="0" y="4" width="2" height="2" fill="#b8b8b8"/><rect x="0" y="8" width="2" height="2" fill="#b8b8b8"/><rect x="0" y="12" width="2" height="2" fill="#b8b8b8"/><rect x="0" y="16" width="2" height="2" fill="#b8b8b8"/><rect x="0" y="20" width="2" height="2" fill="#b8b8b8"/><rect x="0" y="24" width="2" height="2" fill="#b8b8b8"/></svg><svg style="left:15px;top:162px" width="24" height="24" viewBox="0 0 24 24"><path d="M2 4l6-2 8 2 6-2v18l-6 2-8-2-6 2z" fill="#c6e6a6"/><path d="M5 8c4 2 8 0 12 4" stroke="#7ab0c8" stroke-width="2" fill="none"/><path d="M12 18l3 3 7-7" stroke="#3a8a3a" stroke-width="2" fill="none"/></svg><svg style="left:46px;top:162px" width="24" height="24" viewBox="0 0 24 24"><path d="M2 6l7 3 6-3 7 3v13l-7-3-6 3-7-3z" fill="#e8d8a8"/><rect x="3" y="3" width="6" height="6" fill="#3ab03a"/><path d="M3 16l9-4 6 6" fill="#5a8ad0"/><path d="M9 17L20 3" stroke="#6a3a1a" stroke-width="2.5"/></svg><svg style="left:91px;top:162px" width="24" height="24" viewBox="0 0 24 24"><rect x="5" y="13" width="14" height="10" fill="#111"/><circle cx="12" cy="18" r="2.5" fill="#fff"/><circle cx="12" cy="18" r="1.2" fill="#111"/><path d="M12 2v9" stroke="#111" stroke-width="1.8"/><path d="M8 6l4-4 4 4z" fill="#111"/></svg><svg style="left:120px;top:162px" width="24" height="24" viewBox="0 0 24 24"><rect x="2" y="2" width="17" height="14" fill="none" stroke="#111" stroke-width="2.2" stroke-dasharray="3 1.5"/><path d="M4 14l5-7 4 4 4-3v6z" fill="#555"/><path d="M13 10v12l3-3 2.5 4 2-1-2.5-4h4z" fill="#fff" stroke="#111" stroke-width="1"/></svg><svg style="left:4px;top:160px" width="2" height="28"><rect x="0" y="0" width="2" height="2" fill="#b8b8b8"/><rect x="0" y="4" width="2" height="2" fill="#b8b8b8"/><rect x="0" y="8" width="2" height="2" fill="#b8b8b8"/><rect x="0" y="12" width="2" height="2" fill="#b8b8b8"/><rect x="0" y="16" width="2" height="2" fill="#b8b8b8"/><rect x="0" y="20" width="2" height="2" fill="#b8b8b8"/><rect x="0" y="24" width="2" height="2" fill="#b8b8b8"/></svg><div style="left:75px;top:157px;width:1px;height:33px;background:#c8c8c8"></div><svg style="left:80px;top:160px" width="2" height="28"><rect x="0" y="0" width="2" height="2" fill="#b8b8b8"/><rect x="0" y="4" width="2" height="2" fill="#b8b8b8"/><rect x="0" y="8" width="2" height="2" fill="#b8b8b8"/><rect x="0" y="12" width="2" height="2" fill="#b8b8b8"/><rect x="0" y="16" width="2" height="2" fill="#b8b8b8"/><rect x="0" y="20" width="2" height="2" fill="#b8b8b8"/><rect x="0" y="24" width="2" height="2" fill="#b8b8b8"/></svg><svg style="left:5px;top:196px" width="42" height="2"><rect x="0" y="0" width="2" height="2" fill="#b8b8b8"/><rect x="4" y="0" width="2" height="2" fill="#b8b8b8"/><rect x="8" y="0" width="2" height="2" fill="#b8b8b8"/><rect x="12" y="0" width="2" height="2" fill="#b8b8b8"/><rect x="16" y="0" width="2" height="2" fill="#b8b8b8"/><rect x="20" y="0" width="2" height="2" fill="#b8b8b8"/><rect x="24" y="0" width="2" height="2" fill="#b8b8b8"/><rect x="28" y="0" width="2" height="2" fill="#b8b8b8"/><rect x="32" y="0" width="2" height="2" fill="#b8b8b8"/><rect x="36" y="0" width="2" height="2" fill="#b8b8b8"/><rect x="40" y="0" width="2" height="2" fill="#b8b8b8"/></svg><svg style="left:5px;top:206px" width="24" height="24" viewBox="0 0 24 24"><path d="M2 4l7 16 8-15" fill="none" stroke="#333" stroke-width="1.4"/><circle cx="2.5" cy="4" r="1.8" fill="#fff" stroke="#333"/><circle cx="9" cy="20" r="1.8" fill="#fff" stroke="#333"/><circle cx="17" cy="5" r="1.8" fill="#fff" stroke="#333"/><path d="M17 5h4" stroke="#333"/><rect x="14" y="14" width="9" height="9" rx="1.5" fill="#5a9a5a"/><path d="M18.5 16v5M16 18.5h5" stroke="#fff" stroke-width="2.2"/></svg><svg style="left:5px;top:237px" width="24" height="24" viewBox="0 0 24 24"><rect x="1" y="2" width="18" height="17" fill="#8aaad0"/><path d="M1 2h6v6H1zM13 2h6v6h-6zM7 8h6v5H7zM1 13h6v6H1z" fill="#1f3b5e"/><rect x="14" y="14" width="9" height="9" rx="1.5" fill="#5a9a5a"/><path d="M18.5 16v5M16 18.5h5" stroke="#fff" stroke-width="2.2"/></svg><svg style="left:5px;top:266px" width="24" height="24" viewBox="0 0 24 24"><rect x="1" y="1" width="19" height="19" fill="#a8c0de" stroke="#2a4a70" stroke-width="1.3"/><path d="M10.5 1v19M1 10.5h19M1 1l9.5 9.5M10.5 1L1 10.5M10.5 10.5L20 1" stroke="#2a4a70" stroke-width="1.1"/><path d="M5.5 10.5v9.5" stroke="#2a4a70"/><rect x="14" y="14" width="9" height="9" rx="1.5" fill="#5a9a5a"/><path d="M18.5 16v5M16 18.5h5" stroke="#fff" stroke-width="2.2"/></svg><svg style="left:5px;top:295px" width="24" height="24" viewBox="0 0 24 24"><circle cx="8" cy="6" r="4" fill="#4a6ea0"/><path d="M10.5 8c1 4-2 7-5 9" fill="none" stroke="#4a6ea0" stroke-width="2.6" stroke-linecap="round"/><rect x="14" y="14" width="9" height="9" rx="1.5" fill="#5a9a5a"/><path d="M18.5 16v5M16 18.5h5" stroke="#fff" stroke-width="2.2"/></svg><svg style="left:5px;top:326px" width="24" height="24" viewBox="0 0 24 24"><path d="M1 22C4 12 11 4 21 2C19 9 13 16 4 20z" fill="#7aa2d0" stroke="#3a5a80" stroke-width="0.8"/><path d="M1 22L16 7" stroke="#2a4a70" stroke-width="0.8"/><rect x="14" y="14" width="9" height="9" rx="1.5" fill="#5a9a5a"/><path d="M18.5 16v5M16 18.5h5" stroke="#fff" stroke-width="2.2"/></svg><svg style="left:5px;top:356px" width="24" height="24" viewBox="0 0 24 24"><rect x="1.5" y="1.5" width="19" height="19" rx="2" fill="#b6c8e0" stroke="#5a7090" stroke-width="1"/><path d="M3 3l6 14 8-14" fill="none" stroke="#333" stroke-width="1.3"/><circle cx="9" cy="17" r="1.6" fill="#fff" stroke="#333"/><rect x="13" y="13" width="10" height="10" rx="1.5" fill="#5a9a5a"/><path d="M18.0 15v6M15 18.0h6" stroke="#fff" stroke-width="2.2"/></svg><svg style="left:5px;top:385px" width="24" height="24" viewBox="0 0 24 24"><path d="M2 7c0-4 4-6 8-5 4-1 10 0 10 5 0 3-2 5-4 6v5c0 2-3 2-3 0v-4c-1 0-3 0-4-1v3c0 2-3 2-3 0v-4C3 11 2 9 2 7z" fill="#4a78b0" stroke="#1f3a60" stroke-width="0.9"/><path d="M8 5c1 2 0 5-1 6" stroke="#fff" stroke-width="0.9" fill="none"/><rect x="14" y="14" width="9" height="9" rx="1.5" fill="#5a9a5a"/><path d="M18.5 16v5M16 18.5h5" stroke="#fff" stroke-width="2.2"/></svg><svg style="left:36px;top:395px" width="9" height="5"><path d="M0 0h9L4.5 5z" fill="#111"/></svg><svg style="left:5px;top:414px" width="24" height="24" viewBox="0 0 24 24"><circle cx="10" cy="10" r="9" fill="#b8cce6" stroke="#4a6a90" stroke-width="0.8"/><path d="M4 6h5v3H6v4H4zM11 5h5v2h-3v6h-2z" fill="#2f4f7a"/><rect x="14" y="14" width="9" height="9" rx="1.5" fill="#5a9a5a"/><path d="M18.5 16v5M16 18.5h5" stroke="#fff" stroke-width="2.2"/></svg><svg style="left:36px;top:424px" width="9" height="5"><path d="M0 0h9L4.5 5z" fill="#111"/></svg><svg style="left:5px;top:445px" width="24" height="24" viewBox="0 0 24 24"><circle cx="10" cy="10" r="9" fill="#2f4f7a"/><path d="M2 7h16M2 13h16" stroke="#c8d8ea" stroke-width="1.6"/><ellipse cx="10" cy="10" rx="4" ry="9" fill="none" stroke="#c8d8ea" stroke-width="1.2"/><rect x="14" y="14" width="9" height="9" rx="1.5" fill="#5a9a5a"/><path d="M18.5 16v5M16 18.5h5" stroke="#fff" stroke-width="2.2"/></svg><svg style="left:5px;top:475px" width="24" height="24" viewBox="0 0 24 24"><circle cx="10" cy="10" r="9" fill="#e6eef6" stroke="#6a8ab0" stroke-width="1"/><path d="M1 10h18M10 1v18" stroke="#9ab0cc" stroke-width="0.8"/><path d="M4 4l6 12 7-11" fill="none" stroke="#333" stroke-width="1.2"/><circle cx="4" cy="4" r="1.5" fill="#fff" stroke="#333" stroke-width="0.8"/><circle cx="17" cy="5" r="1.5" fill="#fff" stroke="#333" stroke-width="0.8"/><rect x="14" y="14" width="9" height="9" rx="1.5" fill="#5a9a5a"/><path d="M18.5 16v5M16 18.5h5" stroke="#fff" stroke-width="2.2"/></svg><svg style="left:36px;top:485px" width="9" height="5"><path d="M0 0h9L4.5 5z" fill="#111"/></svg><svg style="left:5px;top:504px" width="24" height="24" viewBox="0 0 24 24"><path d="M2 4l7 16 8-15" fill="none" stroke="#333" stroke-width="1.4"/><circle cx="2.5" cy="4" r="1.8" fill="#fff" stroke="#333"/><circle cx="17" cy="5" r="1.8" fill="#fff" stroke="#333"/><rect x="13" y="14" width="9" height="9" rx="1" fill="#e6c42a" stroke="#b8961a" stroke-width="0.8"/><path d="M17.5 15.3v6.3999999999999995M14.8 18.5h5.3999999999999995M15.34 16.34l4.319999999999999 4.319999999999999M19.66 16.34l-4.319999999999999 4.319999999999999" stroke="#fff" stroke-width="1.2"/></svg><svg style="left:36px;top:514px" width="9" height="5"><path d="M0 0h9L4.5 5z" fill="#111"/></svg><svg style="left:5px;top:536px" width="24" height="24" viewBox="0 0 24 24"><rect x="3" y="1" width="19" height="20" rx="1" fill="#3a5a8a"/><path d="M8 7h3v3H8zM13 7h3v3h-3zM18 7h3v3h-3zM8 12h3v3H8zM13 12h3v3h-3zM8 17h3v3H8z" fill="#fff"/><rect x="13" y="13" width="10" height="10" rx="1.5" fill="#5a9a5a"/><path d="M18.0 15v6M15 18.0h6" stroke="#fff" stroke-width="2.2"/></svg>
<div style="left:51px;top:253px;width:316px;height:725px;overflow:hidden"><svg style="left:28px;top:3px" width="16" height="16"><rect x="0.5" y="0.5" width="15" height="15" fill="#fff" stroke="#333"/></svg><svg style="left:52px;top:2px" width="19" height="19"><circle cx="8.5" cy="9" r="7.5" fill="#fff" stroke="#111" stroke-width="1.2"/><circle cx="8.5" cy="9" r="2.2" fill="#111"/></svg><div class="t bi" style="left:76px;top:4.5px">Funde_WT_2017_2019</div><svg style="left:5px;top:29px" width="12" height="12"><path d="M1 3.5L6 8.5L11 3.5" fill="none" stroke="#333" stroke-width="1.6"/></svg><svg style="left:28px;top:27px" width="16" height="16"><rect x="0.5" y="0.5" width="15" height="15" fill="#fff" stroke="#333"/><path d="M3.5 8L6.5 11L12.5 4.5" fill="none" stroke="#222" stroke-width="1.2"/></svg><svg style="left:52px;top:26px" width="19" height="19"><path d="M1.5 9.5v8h8" fill="none" stroke="#b0b0b0" stroke-width="1.2"/><path d="M4.5 6.5h10v9h-10z" fill="#f4f4f4" stroke="#8a8a8a" stroke-width="1.2"/><path d="M6.5 4.5h10v9" fill="none" stroke="#8a8a8a" stroke-width="1.2"/><path d="M8.5 8v5a1.6 1.6 0 003.2 0V1.5" fill="none" stroke="#6a6a6a" stroke-width="1.3"/></svg><div class="t tr" style="left:76px;top:28.5px">Gebiet_und_Wege</div><svg style="left:31px;top:53px" width="12" height="12"><path d="M3.5 1L8.5 6L3.5 11" fill="none" stroke="#888" stroke-width="1.4"/></svg><svg style="left:53px;top:51px" width="16" height="16"><rect x="0.5" y="0.5" width="15" height="15" fill="#fff" stroke="#333"/><path d="M3.5 8L6.5 11L12.5 4.5" fill="none" stroke="#222" stroke-width="1.2"/></svg><svg style="left:77px;top:50px" width="19" height="19"><path d="M1.5 9.5v8h8" fill="none" stroke="#b0b0b0" stroke-width="1.2"/><path d="M4.5 6.5h10v9h-10z" fill="#f4f4f4" stroke="#8a8a8a" stroke-width="1.2"/><path d="M6.5 4.5h10v9" fill="none" stroke="#8a8a8a" stroke-width="1.2"/><path d="M8.5 8v5a1.6 1.6 0 003.2 0V1.5" fill="none" stroke="#6a6a6a" stroke-width="1.3"/></svg><div class="t tr" style="left:101px;top:52.5px">Strasse</div><svg style="left:31px;top:77px" width="12" height="12"><path d="M3.5 1L8.5 6L3.5 11" fill="none" stroke="#888" stroke-width="1.4"/></svg><svg style="left:53px;top:75px" width="16" height="16"><rect x="0.5" y="0.5" width="15" height="15" fill="#fff" stroke="#333"/><path d="M3.5 8L6.5 11L12.5 4.5" fill="none" stroke="#222" stroke-width="1.2"/></svg><svg style="left:77px;top:74px" width="19" height="19"><path d="M1.5 9.5v8h8" fill="none" stroke="#b0b0b0" stroke-width="1.2"/><path d="M4.5 6.5h10v9h-10z" fill="#f4f4f4" stroke="#8a8a8a" stroke-width="1.2"/><path d="M6.5 4.5h10v9" fill="none" stroke="#8a8a8a" stroke-width="1.2"/><path d="M8.5 8v5a1.6 1.6 0 003.2 0V1.5" fill="none" stroke="#6a6a6a" stroke-width="1.3"/></svg><div class="t tr" style="left:101px;top:76.5px">Rundweg</div><svg style="left:31px;top:101px" width="12" height="12"><path d="M3.5 1L8.5 6L3.5 11" fill="none" stroke="#888" stroke-width="1.4"/></svg><svg style="left:53px;top:99px" width="16" height="16"><rect x="0.5" y="0.5" width="15" height="15" fill="#fff" stroke="#333"/><path d="M3.5 8L6.5 11L12.5 4.5" fill="none" stroke="#222" stroke-width="1.2"/></svg><svg style="left:77px;top:98px" width="19" height="19"><path d="M1.5 9.5v8h8" fill="none" stroke="#b0b0b0" stroke-width="1.2"/><path d="M4.5 6.5h10v9h-10z" fill="#f4f4f4" stroke="#8a8a8a" stroke-width="1.2"/><path d="M6.5 4.5h10v9" fill="none" stroke="#8a8a8a" stroke-width="1.2"/><path d="M8.5 8v5a1.6 1.6 0 003.2 0V1.5" fill="none" stroke="#6a6a6a" stroke-width="1.3"/></svg><div class="t tr" style="left:101px;top:100.5px">NSG_1983</div><svg style="left:30px;top:125px" width="12" height="12"><path d="M1 3.5L6 8.5L11 3.5" fill="none" stroke="#333" stroke-width="1.6"/></svg><svg style="left:53px;top:123px" width="16" height="16"><rect x="0.5" y="0.5" width="15" height="15" fill="#fff" stroke="#333"/><path d="M3.5 8L6.5 11L12.5 4.5" fill="none" stroke="#222" stroke-width="1.2"/></svg><svg style="left:77px;top:122px" width="19" height="19"><path d="M1.5 9.5v8h8" fill="none" stroke="#b0b0b0" stroke-width="1.2"/><path d="M4.5 6.5h10v9h-10z" fill="#f4f4f4" stroke="#8a8a8a" stroke-width="1.2"/><path d="M6.5 4.5h10v9" fill="none" stroke="#8a8a8a" stroke-width="1.2"/><path d="M8.5 8v5a1.6 1.6 0 003.2 0V1.5" fill="none" stroke="#6a6a6a" stroke-width="1.3"/></svg><div class="t tr" style="left:101px;top:124.5px">NSG_1937 = Alter Bannwald</div><svg style="left:78px;top:147px" width="16" height="16"><rect x="0.5" y="0.5" width="15" height="15" fill="#fff" stroke="#333"/><path d="M3.5 8L6.5 11L12.5 4.5" fill="none" stroke="#222" stroke-width="1.2"/></svg><svg style="left:99px;top:145px" width="21" height="21"><rect x="2" y="2" width="17" height="17" fill="#fff" stroke="#2a3cc0" stroke-width="1.8"/><path d="M6.5 3v15M13.5 3v15" stroke="#b02020" stroke-width="0.9"/></svg><div class="t tr b" style="left:126px;top:148.5px">nsg_1937_flaeche</div><svg style="left:78px;top:171px" width="16" height="16"><rect x="0.5" y="0.5" width="15" height="15" fill="#fff" stroke="#333"/></svg><svg style="left:99px;top:169px" width="21" height="21"><rect x="2" y="9" width="19" height="3.2" fill="#1e7a2a"/></svg><div class="t bi" style="left:126px;top:172.5px">nsg_1937_umriss</div><svg style="left:6px;top:197px" width="12" height="12"><path d="M3.5 1L8.5 6L3.5 11" fill="none" stroke="#888" stroke-width="1.4"/></svg><svg style="left:28px;top:195px" width="16" height="16"><rect x="0.5" y="0.5" width="15" height="15" fill="#fff" stroke="#333"/><path d="M3.5 8L6.5 11L12.5 4.5" fill="none" stroke="#222" stroke-width="1.2"/></svg><svg style="left:52px;top:194px" width="19" height="19"><path d="M1.5 9.5v8h8" fill="none" stroke="#b0b0b0" stroke-width="1.2"/><path d="M4.5 6.5h10v9h-10z" fill="#f4f4f4" stroke="#8a8a8a" stroke-width="1.2"/><path d="M6.5 4.5h10v9" fill="none" stroke="#8a8a8a" stroke-width="1.2"/><path d="M8.5 8v5a1.6 1.6 0 003.2 0V1.5" fill="none" stroke="#6a6a6a" stroke-width="1.3"/></svg><div class="t tr" style="left:76px;top:196.5px">Pflanzengesellschaften</div><svg style="left:5px;top:221px" width="12" height="12"><path d="M1 3.5L6 8.5L11 3.5" fill="none" stroke="#333" stroke-width="1.6"/></svg><svg style="left:28px;top:219px" width="16" height="16"><rect x="0.5" y="0.5" width="15" height="15" fill="#fff" stroke="#333"/><path d="M3.5 8L6.5 11L12.5 4.5" fill="none" stroke="#222" stroke-width="1.2"/></svg><svg style="left:52px;top:218px" width="19" height="19"><path d="M1.5 9.5v8h8" fill="none" stroke="#b0b0b0" stroke-width="1.2"/><path d="M4.5 6.5h10v9h-10z" fill="#f4f4f4" stroke="#8a8a8a" stroke-width="1.2"/><path d="M6.5 4.5h10v9" fill="none" stroke="#8a8a8a" stroke-width="1.2"/><path d="M8.5 8v5a1.6 1.6 0 003.2 0V1.5" fill="none" stroke="#6a6a6a" stroke-width="1.3"/></svg><div class="t tr" style="left:76px;top:220.5px">Biotope</div><svg style="left:53px;top:243px" width="16" height="16"><rect x="0.5" y="0.5" width="15" height="15" fill="#fff" stroke="#333"/></svg><svg style="left:74px;top:241px" width="21" height="21"><rect x="1.5" y="1.5" width="18.5" height="18.5" fill="#5f9a6a" stroke="#777" stroke-width="0.8"/></svg><div class="t bi" style="left:101px;top:244.5px">Heidewald_1</div><svg style="left:30px;top:269px" width="12" height="12"><path d="M1 3.5L6 8.5L11 3.5" fill="none" stroke="#333" stroke-width="1.6"/></svg><svg style="left:53px;top:267px" width="16" height="16"><rect x="0.5" y="0.5" width="15" height="15" fill="#fff" stroke="#333"/><path d="M3.5 8L6.5 11L12.5 4.5" fill="none" stroke="#222" stroke-width="1.2"/></svg><svg style="left:77px;top:266px" width="19" height="19"><path d="M1.5 9.5v8h8" fill="none" stroke="#b0b0b0" stroke-width="1.2"/><path d="M4.5 6.5h10v9h-10z" fill="#f4f4f4" stroke="#8a8a8a" stroke-width="1.2"/><path d="M6.5 4.5h10v9" fill="none" stroke="#8a8a8a" stroke-width="1.2"/><path d="M8.5 8v5a1.6 1.6 0 003.2 0V1.5" fill="none" stroke="#6a6a6a" stroke-width="1.3"/></svg><div class="t tr" style="left:101px;top:268.5px">Misse</div><div style="left:74px;top:287px;width:242px;height:24px;background:#d9d9d9"></div><svg style="left:78px;top:291px" width="16" height="16"><rect x="0.5" y="0.5" width="15" height="15" fill="#fff" stroke="#333"/><path d="M3.5 8L6.5 11L12.5 4.5" fill="none" stroke="#222" stroke-width="1.2"/></svg><svg style="left:99px;top:289px" width="21" height="21"><rect x="1.5" y="1.5" width="18.5" height="18.5" fill="#a8d88a" stroke="#777" stroke-width="0.8"/></svg><div class="t tr b" style="left:126px;top:292.5px;text-decoration:underline">mis_flaeche</div><svg style="left:78px;top:315px" width="16" height="16"><rect x="0.5" y="0.5" width="15" height="15" fill="#fff" stroke="#333"/></svg><svg style="left:99px;top:313px" width="21" height="21"><rect x="2" y="9.5" width="19" height="1.5" fill="#d03a3a"/></svg><div class="t bi" style="left:126px;top:316.5px">mis_umriss</div><svg style="left:31px;top:341px" width="12" height="12"><path d="M3.5 1L8.5 6L3.5 11" fill="none" stroke="#888" stroke-width="1.4"/></svg><svg style="left:53px;top:339px" width="16" height="16"><rect x="0.5" y="0.5" width="15" height="15" fill="#fff" stroke="#333"/></svg><svg style="left:77px;top:338px" width="19" height="19"><path d="M1.5 9.5v8h8" fill="none" stroke="#b0b0b0" stroke-width="1.2"/><path d="M4.5 6.5h10v9h-10z" fill="#f4f4f4" stroke="#8a8a8a" stroke-width="1.2"/><path d="M6.5 4.5h10v9" fill="none" stroke="#8a8a8a" stroke-width="1.2"/><path d="M8.5 8v5a1.6 1.6 0 003.2 0V1.5" fill="none" stroke="#6a6a6a" stroke-width="1.3"/></svg><div class="t tr" style="left:101px;top:340.5px">Moorkern1</div><svg style="left:31px;top:365px" width="12" height="12"><path d="M3.5 1L8.5 6L3.5 11" fill="none" stroke="#888" stroke-width="1.4"/></svg><svg style="left:53px;top:363px" width="16" height="16"><rect x="0.5" y="0.5" width="15" height="15" fill="#fff" stroke="#333"/></svg><svg style="left:77px;top:362px" width="19" height="19"><path d="M1.5 9.5v8h8" fill="none" stroke="#b0b0b0" stroke-width="1.2"/><path d="M4.5 6.5h10v9h-10z" fill="#f4f4f4" stroke="#8a8a8a" stroke-width="1.2"/><path d="M6.5 4.5h10v9" fill="none" stroke="#8a8a8a" stroke-width="1.2"/><path d="M8.5 8v5a1.6 1.6 0 003.2 0V1.5" fill="none" stroke="#6a6a6a" stroke-width="1.3"/></svg><div class="t tr" style="left:101px;top:364.5px">Moorkern2</div><svg style="left:31px;top:389px" width="12" height="12"><path d="M3.5 1L8.5 6L3.5 11" fill="none" stroke="#888" stroke-width="1.4"/></svg><svg style="left:53px;top:387px" width="16" height="16"><rect x="0.5" y="0.5" width="15" height="15" fill="#fff" stroke="#333"/></svg><svg style="left:77px;top:386px" width="19" height="19"><path d="M1.5 9.5v8h8" fill="none" stroke="#b0b0b0" stroke-width="1.2"/><path d="M4.5 6.5h10v9h-10z" fill="#f4f4f4" stroke="#8a8a8a" stroke-width="1.2"/><path d="M6.5 4.5h10v9" fill="none" stroke="#8a8a8a" stroke-width="1.2"/><path d="M8.5 8v5a1.6 1.6 0 003.2 0V1.5" fill="none" stroke="#6a6a6a" stroke-width="1.3"/></svg><div class="t tr" style="left:101px;top:388.5px">Moorkern3</div><svg style="left:31px;top:413px" width="12" height="12"><path d="M3.5 1L8.5 6L3.5 11" fill="none" stroke="#888" stroke-width="1.4"/></svg><svg style="left:53px;top:411px" width="16" height="16"><rect x="0.5" y="0.5" width="15" height="15" fill="#fff" stroke="#333"/></svg><svg style="left:77px;top:410px" width="19" height="19"><path d="M1.5 9.5v8h8" fill="none" stroke="#b0b0b0" stroke-width="1.2"/><path d="M4.5 6.5h10v9h-10z" fill="#f4f4f4" stroke="#8a8a8a" stroke-width="1.2"/><path d="M6.5 4.5h10v9" fill="none" stroke="#8a8a8a" stroke-width="1.2"/><path d="M8.5 8v5a1.6 1.6 0 003.2 0V1.5" fill="none" stroke="#6a6a6a" stroke-width="1.3"/></svg><div class="t tr" style="left:101px;top:412.5px">Moorkern4</div><svg style="left:53px;top:435px" width="16" height="16"><rect x="0.5" y="0.5" width="15" height="15" fill="#fff" stroke="#333"/></svg><svg style="left:74px;top:433px" width="21" height="21"><rect x="1.5" y="1.5" width="18.5" height="18.5" fill="#d8b84a" stroke="#777" stroke-width="0.8"/></svg><div class="t bi" style="left:101px;top:436.5px">Moorwald_1</div><svg style="left:31px;top:461px" width="12" height="12"><path d="M3.5 1L8.5 6L3.5 11" fill="none" stroke="#888" stroke-width="1.4"/></svg><svg style="left:53px;top:459px" width="16" height="16"><rect x="0.5" y="0.5" width="15" height="15" fill="#fff" stroke="#333"/></svg><svg style="left:77px;top:458px" width="19" height="19"><path d="M1.5 9.5v8h8" fill="none" stroke="#b0b0b0" stroke-width="1.2"/><path d="M4.5 6.5h10v9h-10z" fill="#f4f4f4" stroke="#8a8a8a" stroke-width="1.2"/><path d="M6.5 4.5h10v9" fill="none" stroke="#8a8a8a" stroke-width="1.2"/><path d="M8.5 8v5a1.6 1.6 0 003.2 0V1.5" fill="none" stroke="#6a6a6a" stroke-width="1.3"/></svg><div class="t tr" style="left:101px;top:460.5px">Tannenwald</div><svg style="left:6px;top:485px" width="12" height="12"><path d="M3.5 1L8.5 6L3.5 11" fill="none" stroke="#888" stroke-width="1.4"/></svg><svg style="left:28px;top:483px" width="16" height="16"><rect x="0.5" y="0.5" width="15" height="15" fill="#fff" stroke="#333"/></svg><svg style="left:52px;top:482px" width="19" height="19"><path d="M1 6C3 2 7 3 9 4S15 3 17 5S16 11 14 12S10 15 6 14S0 10 1 6z" fill="#ddd" stroke="#999"/></svg><div class="t bi" style="left:76px;top:484.5px">Bodenarten</div><svg style="left:6px;top:509px" width="12" height="12"><path d="M3.5 1L8.5 6L3.5 11" fill="none" stroke="#888" stroke-width="1.4"/></svg><svg style="left:28px;top:507px" width="16" height="16"><rect x="0.5" y="0.5" width="15" height="15" fill="#fff" stroke="#333"/></svg><svg style="left:52px;top:506px" width="19" height="19"><path d="M1.5 9.5v8h8" fill="none" stroke="#b0b0b0" stroke-width="1.2"/><path d="M4.5 6.5h10v9h-10z" fill="#f4f4f4" stroke="#8a8a8a" stroke-width="1.2"/><path d="M6.5 4.5h10v9" fill="none" stroke="#8a8a8a" stroke-width="1.2"/><path d="M8.5 8v5a1.6 1.6 0 003.2 0V1.5" fill="none" stroke="#6a6a6a" stroke-width="1.3"/></svg><div class="t tr" style="left:76px;top:508.5px">Baumfreie_offene_Moorbereiche</div><svg style="left:5px;top:533px" width="12" height="12"><path d="M1 3.5L6 8.5L11 3.5" fill="none" stroke="#333" stroke-width="1.6"/></svg><svg style="left:28px;top:531px" width="16" height="16"><rect x="0.5" y="0.5" width="15" height="15" fill="#fff" stroke="#333"/></svg><svg style="left:52px;top:530px" width="19" height="19"><rect x="1" y="1" width="17" height="17" fill="#c9d6e6"/><path d="M1 1h5v5H1zM12 1h6v5h-6zM6 6h6v6H6zM1 12h5v6H1zM12 12h6v6h-6z" fill="#1f3b5e"/></svg><div class="t bi" style="left:76px;top:532.5px">OpenStreetMap Standard</div><svg style="left:6px;top:557px" width="12" height="12"><path d="M3.5 1L8.5 6L3.5 11" fill="none" stroke="#888" stroke-width="1.4"/></svg><svg style="left:28px;top:555px" width="16" height="16"><rect x="0.5" y="0.5" width="15" height="15" fill="#fff" stroke="#333"/></svg><svg style="left:52px;top:554px" width="19" height="19"><rect x="1" y="1" width="17" height="17" fill="#c9d6e6"/><path d="M1 1h5v5H1zM12 1h6v5h-6zM6 6h6v6H6zM1 12h5v6H1zM12 12h6v6h-6z" fill="#1f3b5e"/></svg><div class="t bi" style="left:76px;top:556.5px">WMS LGRB-BW BK50: Bodenkarte 1:50000</div><svg style="left:6px;top:581px" width="12" height="12"><path d="M3.5 1L8.5 6L3.5 11" fill="none" stroke="#888" stroke-width="1.4"/></svg><svg style="left:28px;top:579px" width="16" height="16"><rect x="0.5" y="0.5" width="15" height="15" fill="#fff" stroke="#333"/></svg><svg style="left:52px;top:578px" width="19" height="19"><rect x="1" y="1" width="17" height="17" fill="#c9d6e6"/><path d="M1 1h5v5H1zM12 1h6v5h-6zM6 6h6v6H6zM1 12h5v6H1zM12 12h6v6h-6z" fill="#1f3b5e"/></svg><div class="t bi" style="left:76px;top:580.5px">WMS LGRB-BW GK50: Geologische Karte</div><div style="left:311px;top:0px;width:5px;height:287px;background:#ececec"></div><div style="left:311px;top:311px;width:5px;height:290px;background:#ececec"></div></div>
<div style="left:818px;top:225px;width:1041px;height:716px;background:#f0f0f0;border:1px solid #707070;box-shadow:2px 5px 16px rgba(0,0,0,.35)"></div>
<div style="left:819px;top:226px;width:1039px;height:37px;background:#fff"></div>
<svg style="left:827px;top:235px;" width="20" height="20" viewBox="0 0 20 20"><circle cx="9.5" cy="9.5" r="7" fill="none" stroke="#6b9a3a" stroke-width="3.2"/><path d="M11 11L17 17" stroke="#6b9a3a" stroke-width="3.2"/><circle cx="9.5" cy="9.5" r="2" fill="#e0b030"/></svg>
<div class="t" style="left:853px;top:237px;font-size:14.8px;color:#111">Layereigenschaften - mis_flaeche | Information</div>
<svg style="left:1830px;top:237px;" width="14" height="14" viewBox="0 0 14 14"><path d="M1 1L13 13M13 1L1 13" stroke="#111" stroke-width="1.1"/></svg>
<div style="left:819px;top:263px;width:274px;height:21px;background:#fff;border-left:1px solid #7a7a7a;border-right:1px solid #7a7a7a"></div>
<svg style="left:828px;top:266px;" width="16" height="16" viewBox="0 0 16 16"><circle cx="6.5" cy="6.5" r="4.5" fill="none" stroke="#888" stroke-width="1.2"/><path d="M10 10L14 14" stroke="#888" stroke-width="1.4"/></svg>
<div style="left:819px;top:284px;width:274px;height:8px;background:#5e5e5e"></div>
<div style="left:819px;top:292px;width:254px;height:648px;background:#5e5e5e"></div>
<div style="left:819px;top:292px;width:254px;height:38px;background:#efefef"></div>
<div style="left:1073px;top:292px;width:20px;height:648px;background:#f0f0f0"></div>
<div style="left:1073px;top:313px;width:20px;height:543px;background:#c8c8c8"></div>
<svg style="left:1075px;top:295px;" width="16" height="14" viewBox="0 0 16 14"><path d="M3 10L8 5L13 10" fill="none" stroke="#555" stroke-width="2"/></svg>
<div class="t" style="left:859px;top:303px;font-size:15px;color:#111">Information</div>
<svg style="left:826px;top:298px;" width="27" height="27" viewBox="0 0 27 27"><circle cx="13" cy="13" r="12.5" fill="#4a88c8"/><circle cx="15" cy="7" r="2" fill="#e8f0f8"/><path d="M13 11h3l-2.5 9h-3z" fill="#e8f0f8"/></svg>
<div class="t" style="left:856px;top:341px;font-size:15px;color:#fff">Quelle</div>
<svg style="left:823px;top:336px" width="27" height="27" viewBox="0 0 24 24"><circle cx="14" cy="13" r="7" fill="#c8d4e0" stroke="#6a7a90" stroke-width="2.4" stroke-dasharray="2.5 1.5"/><circle cx="14" cy="13" r="3" fill="#5a5a5a"/><path d="M2 5a4 4 0 016-3.5l-2.5 2.5 2 2L10 3.5a4 4 0 01-3.5 6" fill="#f4f4f4" stroke="#333" stroke-width="0.8"/><path d="M7 8l12 12" stroke="#e0c050" stroke-width="3.2"/><path d="M7 8l12 12" stroke="#8a6a20" stroke-width="0.6"/></svg>
<div class="t" style="left:856px;top:379px;font-size:15px;color:#fff">Symbolisierung</div>
<svg style="left:823px;top:374px" width="27" height="27" viewBox="0 0 24 24"><path d="M2 12l8-5 8 6-8 6z" fill="#6a90c8"/><path d="M2 15l8-5 7 5-8 6z" fill="#d84a4a"/><path d="M8 10l5-3 5 4-5 4z" fill="#f0d8a0" stroke="#a08040" stroke-width="0.6"/><path d="M14 9L22 2l1 1.5-7 8z" fill="#e8c040" stroke="#8a6a20" stroke-width="0.6"/></svg>
<div class="t" style="left:856px;top:417px;font-size:15px;color:#fff">Beschriftungen</div>
<svg style="left:823px;top:412px" width="27" height="27" viewBox="0 0 24 24"><path d="M1 12l4-5h17v10H5z" fill="#f5e03a" stroke="#b8a020" stroke-width="0.8"/><text x="6" y="15.5" font-family="Liberation Sans" font-size="8.5" font-weight="bold" fill="#333">abc</text></svg>
<div class="t" style="left:856px;top:455px;font-size:15px;color:#fff">Diagramme</div>
<svg style="left:823px;top:450px" width="27" height="27" viewBox="0 0 24 24"><circle cx="9" cy="8" r="6.5" fill="#d83030" stroke="#5a2a1a" stroke-width="0.6"/><path d="M9 8L3.4 4.8A6.5 6.5 0 0114.6 4.8z" fill="#f0c030"/><path d="M9 8L3.4 4.8A6.5 6.5 0 009 14.5z" fill="#2aa040"/><rect x="10" y="14" width="4" height="8" fill="#f0d040"/><rect x="14" y="10" width="4" height="12" fill="#3aa03a"/><rect x="18" y="16" width="4" height="6" fill="#b02020"/></svg>
<div class="t" style="left:856px;top:493px;font-size:15px;color:#fff">3D-Ansicht</div>
<svg style="left:823px;top:488px" width="27" height="27" viewBox="0 0 24 24"><path d="M12 2l10 5-10 5L2 7z" fill="#e86a6a" stroke="#333" stroke-width="0.7"/><path d="M2 7l10 5v10L2 17z" fill="#8ac83a" stroke="#333" stroke-width="0.7"/><path d="M22 7l-10 5v10l10-5z" fill="#f0d040" stroke="#333" stroke-width="0.7"/></svg>
<div class="t" style="left:856px;top:531px;font-size:15px;color:#fff">Felder</div>
<svg style="left:823px;top:526px" width="27" height="27" viewBox="0 0 24 24"><rect x="3" y="2" width="18" height="20" fill="#e6eef8" stroke="#4a6ab0"/><path d="M3 6h18M3 10h18M3 14h18M3 18h18" stroke="#4a6ab0" stroke-width="0.8"/><rect x="7" y="1" width="5" height="22" fill="#f0e080" stroke="#c8b040" stroke-width="0.7"/></svg>
<div class="t" style="left:856px;top:569px;font-size:15px;color:#fff">Attributformular</div>
<svg style="left:823px;top:564px" width="27" height="27" viewBox="0 0 24 24"><rect x="2" y="2" width="20" height="20" fill="#dfe8f2" stroke="#6a8ab0"/><rect x="4" y="5" width="5" height="4" fill="#fff" stroke="#6a8ab0" stroke-width="0.8"/><rect x="11" y="5" width="9" height="4" fill="#fff" stroke="#6a8ab0" stroke-width="0.8"/><rect x="4" y="13" width="5" height="4" fill="#fff" stroke="#6a8ab0" stroke-width="0.8"/><rect x="11" y="13" width="9" height="4" fill="#fff" stroke="#6a8ab0" stroke-width="0.8"/></svg>
<div class="t" style="left:856px;top:607px;font-size:15px;color:#fff">Verknüpfungen</div>
<svg style="left:823px;top:602px" width="27" height="27" viewBox="0 0 24 24"><path d="M21 2v20L8 12z" fill="#4a8ad8"/><circle cx="3" cy="12" r="2" fill="#4a8ad8"/></svg>
<div class="t" style="left:856px;top:645px;font-size:15px;color:#fff">Hilfsspeicher</div>
<svg style="left:823px;top:640px" width="27" height="27" viewBox="0 0 24 24"><path d="M8 2h10l4 4v16H8z" fill="#f4f4f4" stroke="#888"/><ellipse cx="8" cy="12" rx="7" ry="3" fill="#bbb"/><path d="M1 12v8c0 3 14 3 14 0v-8" fill="#aaa" stroke="#666" stroke-width="0.7"/><path d="M1 16c0 3 14 3 14 0" stroke="#666" fill="none" stroke-width="0.7"/></svg>
<div class="t" style="left:856px;top:683px;font-size:15px;color:#fff">Aktionen</div>
<svg style="left:823px;top:678px" width="27" height="27" viewBox="0 0 24 24"><circle cx="13" cy="10" r="8" fill="#dfe8f2" stroke="#5a7ab0" stroke-width="2.5" stroke-dasharray="3 2"/><circle cx="13" cy="10" r="5.5" fill="#4a8ad8"/><path d="M11 7v6l5-3z" fill="#fff"/><circle cx="4" cy="20" r="3" fill="#8ab0de" stroke="#5a7ab0"/></svg>
<div class="t" style="left:856px;top:721px;font-size:15px;color:#fff">Anzeigen</div>
<svg style="left:823px;top:716px" width="27" height="27" viewBox="0 0 24 24"><path d="M3 3h18a2 2 0 012 2v9a2 2 0 01-2 2H11l-5 5v-5H3a2 2 0 01-2-2V5a2 2 0 012-2z" fill="#f2e68a" stroke="#b8a83a" stroke-width="0.8"/></svg>
<div class="t" style="left:856px;top:759px;font-size:15px;color:#fff">Darstellung</div>
<svg style="left:823px;top:754px" width="27" height="27" viewBox="0 0 24 24"><path d="M2 20l4-8 6 4-7 6z" fill="#d8a860"/><path d="M9 13L21 2l1 1-11 12z" fill="#c89040"/></svg>
<div class="t" style="left:856px;top:797px;font-size:15px;color:#fff">Variablen</div>
<svg style="left:823px;top:792px" width="27" height="27" viewBox="0 0 24 24"><text x="4" y="21" font-family="Liberation Serif" font-size="24" fill="#7a3a8a">ε</text></svg>
<div class="t" style="left:856px;top:835px;font-size:15px;color:#fff">Metadaten</div>
<svg style="left:823px;top:830px" width="27" height="27" viewBox="0 0 24 24"><path d="M3 2h13l4 4v16H3z" fill="#fff" stroke="#666"/><path d="M6 8h10M6 11h10M6 14h10M6 17h8" stroke="#888"/><path d="M12 16L22 4l1.5 1.5-10 12z" fill="#e86a2a"/></svg>
<div class="t" style="left:856px;top:873px;font-size:15px;color:#fff">Abhängigkeiten</div>
<svg style="left:823px;top:868px" width="27" height="27" viewBox="0 0 24 24"><rect x="2" y="2" width="9" height="9" fill="#8ab0e6"/><rect x="13" y="13" width="9" height="9" fill="#8ab0e6"/><path d="M5 14v6h6M19 10V4h-6" fill="none" stroke="#4a7ac8" stroke-width="2.5"/><path d="M9 17l3 3-3 3M15 7l-3-3 3-3" fill="#4a7ac8"/></svg>
<div class="t" style="left:856px;top:911px;font-size:15px;color:#fff">Legende</div>
<svg style="left:823px;top:906px" width="27" height="27" viewBox="0 0 24 24"><rect x="2" y="2" width="6" height="5" fill="#f0c020"/><rect x="2" y="9" width="6" height="5" fill="#e03020"/><rect x="2" y="16" width="6" height="5" fill="#20a040"/><path d="M10 5h8M10 12h10M10 19h7" stroke="#aaa" stroke-width="1.6"/></svg>
<div style="left:1100px;top:267px;width:734px;height:634px;background:#fff"></div>
<div style="left:1834px;top:267px;width:19px;height:634px;background:#f0f0f0"></div>
<div style="left:1834px;top:288px;width:19px;height:222px;background:#c8c8c8"></div>
<svg style="left:1836px;top:270px;" width="15" height="14" viewBox="0 0 15 14"><path d="M2 10L7.5 5L13 10" fill="none" stroke="#555" stroke-width="2"/></svg>
<svg style="left:1836px;top:883px;" width="15" height="14" viewBox="0 0 15 14"><path d="M2 4L7.5 9L13 4" fill="none" stroke="#555" stroke-width="2"/></svg>
<div style="left:1100px;top:267px;width:734px;height:634px;overflow:hidden">
<div class="t hd" style="left:15px;top:11px;">Informationen des Anbieters</div>
<div style="left:4px;top:40px;width:726px;height:1px;background:#a0a0a0"></div>
<div class="t lab" style="left:36px;top:53.5px;">Name</div>
<div class="t val" style="left:134px;top:53.5px;">mis_flaeche</div>
<div class="t lab" style="left:36px;top:72.5px;">Pfad</div>
<div class="t val" style="left:134px;top:71px;font-size:13px;color:#7a9cc6;text-decoration:underline">D:\Science\_QGIS für Pilzfreunde\Shape-Exporte\WT\Misse.shp</div>
<div class="t lab" style="left:36px;top:91.5px;">Speicher</div>
<div class="t val" style="left:134px;top:91.5px;">ESRI Shapefile</div>
<div class="t lab" style="left:36px;top:110.5px;">Kommentar</div>
<div class="t lab" style="left:36px;top:129.5px;">Kodierung</div>
<div class="t val" style="left:134px;top:129.5px;">UTF-8</div>
<div class="t lab" style="left:36px;top:148.5px;">Geometrie</div>
<div class="t val" style="left:134px;top:148.5px;">Polygon (MultiPolygonZ)</div>
<div class="t lab" style="left:36px;top:167.5px;">KBS</div>
<div class="t val" style="left:134px;top:167.5px;">EPSG:4326 - WGS 84 - Geographisch</div>
<div class="t lab" style="left:36px;top:186.5px;">Ausdehnung</div>
<div class="t val" style="left:134px;top:186.5px;">8.6390346474945545,48.7291036000569029 : 8.6466597486287355,48.7338250502943993</div>
<div class="t lab" style="left:36px;top:205.5px;">Einheit</div>
<div class="t val" style="left:134px;top:205.5px;">Grad</div>
<div class="t lab" style="left:36px;top:224.5px;">Objektanzahl</div>
<div class="t val" style="left:134px;top:224.5px;">1</div>
<div class="t hd" style="left:15px;top:280px;">Identifikation</div>
<div style="left:4px;top:309px;width:726px;height:1px;background:#a0a0a0"></div>
<div class="t lab" style="left:36px;top:322.5px;">Identifier</div>
<div class="t lab" style="left:36px;top:341.5px;">Parent Identifier</div>
<div class="t lab" style="left:36px;top:360.5px;">Title</div>
<div class="t lab" style="left:36px;top:379.5px;">Type</div>
<div class="t val" style="left:154px;top:379.5px;">dataset</div>
<div class="t lab" style="left:36px;top:398.5px;">Language</div>
<div class="t lab" style="left:36px;top:417.5px;">Abstract</div>
<div class="t lab" style="left:36px;top:436.5px;">Categories</div>
<div class="t lab" style="left:36px;top:455.5px;">Keywords</div>
<div class="t hd" style="left:15px;top:511px;">Ausdehnung</div>
<div style="left:4px;top:540px;width:726px;height:1px;background:#a0a0a0"></div>
<div class="t lab" style="left:36px;top:553.5px;">CRS</div>
<div class="t lab" style="left:36px;top:572.5px;">Spatial Extent</div>
<div class="t val" style="left:154px;top:572.5px;"><b>CRS:</b> - Projected</div>
<div class="t val" style="left:154px;top:589.5px;"><b>X Minimum:</b> 0</div>
<div class="t val" style="left:154px;top:606.5px;"><b>Y Minimum:</b> 0</div>
<div class="t val" style="left:154px;top:623.5px;"><b>X Maximum:</b> 0</div>
</div>
<div style="left:1098px;top:910px;width:93px;height:26px;background:#e1e1e1;border:1px solid #adadad"></div>
<div class="t" style="left:1130px;top:916px;font-size:12.5px;color:#111">Stil</div>
<svg style="left:1174px;top:918px;" width="10" height="8" viewBox="0 0 10 8"><path d="M0 1h9L4.5 6z" fill="#111"/></svg>
<div class="t btn" style="left:1463px;top:910px;width:91px;height:26px;border:2px solid #0a72d0;line-height:23px">OK</div>
<div class="t btn" style="left:1563px;top:910px;width:91px;height:26px;">Abbrechen</div>
<div class="t btn" style="left:1663px;top:910px;width:91px;height:26px;">Anwenden</div>
<div class="t btn" style="left:1763px;top:910px;width:91px;height:26px;">Hilfe</div>
<div style="left:4px;top:1004px;width:279px;height:21px;background:#fff;border:1px solid #7a7a7a"></div>
<svg style="left:12px;top:1007px;" width="16" height="16" viewBox="0 0 16 16"><circle cx="6.5" cy="6.5" r="4.5" fill="none" stroke="#888" stroke-width="1.2"/><path d="M10 10L14 14" stroke="#888" stroke-width="1.4"/></svg>
<div class="t" style="left:33px;top:1009px;font-size:12.8px;color:#777">Zu suchender Typ (Strg+K)</div>
<div class="t" style="left:924px;top:1010px;font-size:12.8px;color:#222">Koordinate</div>
<div style="left:988px;top:1004px;width:132px;height:21px;background:#fff;border:1px solid #8a8a8a"></div>
<div class="t" style="left:994px;top:1010px;font-size:12.8px;color:#222">473389.7,5397886.6</div>
<svg style="left:1123px;top:1004px;" width="22" height="22" viewBox="0 0 22 22"><ellipse cx="9" cy="11" rx="6" ry="8" fill="#fff" stroke="#222" stroke-width="1.6" transform="rotate(-25 9 11)"/><path d="M5 6l6 5" stroke="#222" stroke-width="1.2"/><circle cx="13" cy="16" r="4" fill="#fff" stroke="#222" stroke-width="1.4"/><circle cx="13" cy="16" r="1.3" fill="#222"/><path d="M17 4l2-2M19 7h2" stroke="#444" stroke-width="1"/></svg>
<div class="t" style="left:1157px;top:1010px;font-size:12.8px;color:#222">Maßstab</div>
<div style="left:1208px;top:1004px;width:91px;height:21px;background:#fff;border:1px solid #8a8a8a"></div>
<div class="t" style="left:1212px;top:1010px;font-size:12.8px;color:#222">1:4500</div>
<svg style="left:1280px;top:1010px;" width="12" height="10" viewBox="0 0 12 10"><path d="M1 2L6 7L11 2" fill="none" stroke="#555" stroke-width="1.1"/></svg>
<svg style="left:1309px;top:1004px;" width="17" height="22" viewBox="0 0 17 22"><path d="M4 10V6a4.5 4.5 0 019 0v4" fill="none" stroke="#777" stroke-width="2"/><rect x="2" y="10" width="13" height="10" rx="1" fill="#777"/></svg>
<div class="t" style="left:1335px;top:1010px;font-size:12.8px;color:#222">Vergrößerung</div>
<div style="left:1418px;top:1005px;width:86px;height:20px;background:#fff;border:1px solid #8a8a8a"></div>
<div class="t" style="left:1421px;top:1010px;font-size:12.8px;color:#222">100%</div>
<svg style="left:1488px;top:1006px;" width="15" height="18" viewBox="0 0 15 18"><path d="M3 7L7.5 2L12 7z M3 11L7.5 16L12 11z" fill="#111"/></svg>
<div class="t" style="left:1513px;top:1010px;font-size:12.8px;color:#222">Drehung</div>
<div style="left:1570px;top:1005px;width:85px;height:20px;background:#fff;border:1px solid #8a8a8a"></div>
<div class="t" style="left:1573px;top:1010px;font-size:12.8px;color:#222">0,0 °</div>
<svg style="left:1640px;top:1006px;" width="15" height="18" viewBox="0 0 15 18"><path d="M3 7L7.5 2L12 7z M3 11L7.5 16L12 11z" fill="#111"/></svg>
<svg style="left:1661px;top:1007px;" width="16" height="16" viewBox="0 0 16 16"><rect x="0.5" y="0.5" width="15" height="15" fill="#fff" stroke="#333"/><path d="M3 8L6.5 11.5L13 4" fill="none" stroke="#222" stroke-width="1.2"/></svg>
<div class="t" style="left:1683px;top:1010px;font-size:12.8px;color:#222">Zeichnen</div>
<svg style="left:1751px;top:1006px;" width="20" height="20" viewBox="0 0 20 20"><circle cx="10" cy="10" r="8" fill="none" stroke="#888" stroke-width="1.6"/><ellipse cx="10" cy="10" rx="3.5" ry="8" fill="none" stroke="#888" stroke-width="1.2"/><path d="M2 10h16M3.5 6h13M3.5 14h13" stroke="#888" stroke-width="1.2"/></svg>
<div class="t" style="left:1775px;top:1010px;font-size:12.8px;color:#222">EPSG:25832</div>
<svg style="left:1862px;top:1005px;" width="22" height="22" viewBox="0 0 22 22"><path d="M11 2C5.5 2 1.5 5.5 1.5 9.5c0 2.5 1.5 4.5 3.8 5.8L4.5 20l5-3.5c.5.1 1 .1 1.5.1 5.5 0 9.5-3.5 9.5-7.5S16.5 2 11 2z" fill="#666"/><circle cx="6.5" cy="9.5" r="1.5" fill="#fff"/><circle cx="11" cy="9.5" r="1.5" fill="#fff"/><circle cx="15.5" cy="9.5" r="1.5" fill="#fff"/></svg>
<svg style="left:1895px;top:1004px;" width="23" height="23" viewBox="0 0 23 23"><path d="M3 8h5V5a2 2 0 014 0v3h5v5h2a2 2 0 010 4h-2v4H3z" fill="#ddd" stroke="#888" stroke-width="1.2"/></svg>
<svg style="left:0;top:0" width="1920" height="1037" viewBox="0 0 1920 1037"><path d="M277 546C420 512 560 460 695 465" fill="none" stroke="#e41010" stroke-width="3"/><path d="M712 467L687 456L689 465L686 470z" fill="#e41010"/><path d="M277 546C520 545 760 572 1000 573C1150 574 1255 545 1291 482" fill="none" stroke="#e41010" stroke-width="3"/><path d="M1296 466L1287.5 491L1294 486L1301 490z" fill="#e41010"/><rect x="105" y="533" width="170" height="35" fill="none" stroke="#e41010" stroke-width="4"/><rect x="813" y="287" width="162" height="41" fill="none" stroke="#e41010" stroke-width="4"/><rect x="1113.5" y="423.5" width="357" height="35" fill="none" stroke="#e41010" stroke-width="4"/><path d="M854 256H1078" stroke="#e41010" stroke-width="3" stroke-linecap="round"/></svg>
<div class="t" style="left:953px;top:911px;width:181px;height:45px;background:#ffff80;border:1.5px solid #222;border-radius:11px;font-size:23px;font-weight:bold;text-align:center;line-height:42px;color:#111">Bild 2</div></body></html>
